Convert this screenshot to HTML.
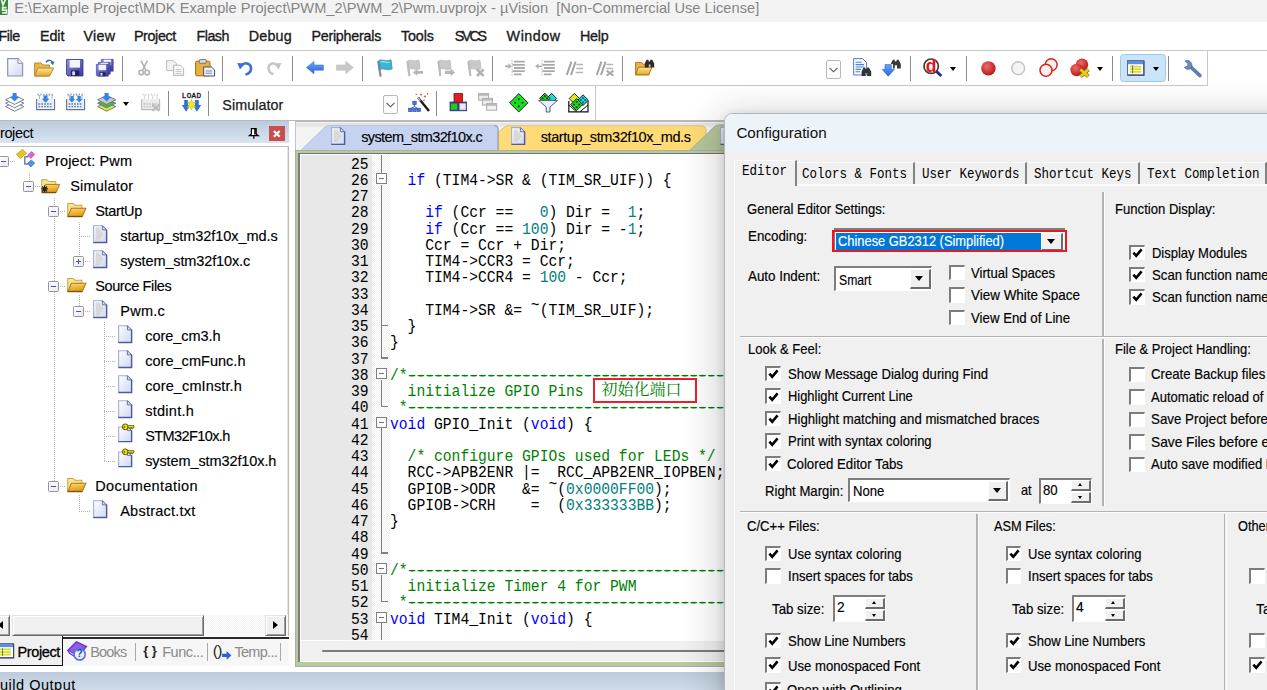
<!DOCTYPE html>
<html><head><meta charset="utf-8"><title>uVision</title>
<style>
html,body{margin:0;padding:0;}
body{width:1267px;height:690px;overflow:hidden;position:relative;background:#fff;font-family:"Liberation Sans",sans-serif;}
.t{position:absolute;white-space:pre;line-height:20px;height:20px;transform-origin:0 50%;}
.a{position:absolute;}
svg{position:absolute;overflow:visible;}
.cb{position:absolute;width:13px;height:13px;background:#fff;border:1px solid;border-color:#848484 #fff #fff #848484;box-shadow:inset 1px 1px 0 #6a6a6a, inset -1px -1px 0 #e3e3e3;}
.cb.k:after{content:"";position:absolute;left:3px;top:0px;width:3.5px;height:7.5px;border:solid #000;border-width:0 2px 2px 0;transform:rotate(40deg);}
.sunk{position:absolute;background:#fff;border:1px solid;border-color:#848484 #fff #fff #848484;box-shadow:inset 1px 1px 0 #6a6a6a, inset -1px -1px 0 #e3e3e3;box-sizing:border-box;}
.btn{position:absolute;background:#f0f0f0;border:1px solid;border-color:#e3e3e3 #6a6a6a #6a6a6a #e3e3e3;box-shadow:inset 1px 1px 0 #fff, inset -1px -1px 0 #a0a0a0;box-sizing:border-box;}
.tri{position:absolute;width:0;height:0;border-left:4px solid transparent;border-right:4px solid transparent;border-top:4px solid #000;}
.vsep{position:absolute;width:1px;background:#a0a0a0;box-shadow:1px 0 0 #fff;}
.hsep{position:absolute;height:1px;background:#a0a0a0;box-shadow:0 1px 0 #fff;}
.tsep{position:absolute;width:1px;background:#8d8d8d;}
.dot{position:absolute;}
</style></head><body>
<div class="a" style="left:0.00px;top:0.00px;width:1267.00px;height:22.30px;background:#f3f3f3;"></div>
<svg style="left:-9px;top:-1.6px" width="17" height="17" viewBox="0 0 17 17"><rect x="0" y="0" width="17" height="17" rx="2" fill="#38873f"/><path d="M10 0 L12 7 L15.6 -1 M15.6 9.6 h-4 v2.6 h4 v2.6 h-4.4" stroke="#e9f5e9" stroke-width="1.7" fill="none"/></svg>
<span class="t" style="left:14.20px;top:-1.70px;font-size:14.6px;color:#858585;letter-spacing:0.037px;">E:\Example Project\MDK Example Project\PWM_2\PWM_2\Pwm.uvprojx - µVision  [Non-Commercial Use License]</span>
<span class="t" style="left:-1.50px;top:26.20px;font-size:14.3px;color:#1b1b1b;letter-spacing:-0.449px;-webkit-text-stroke:0.35px #1b1b1b;">File</span>
<span class="t" style="left:39.90px;top:26.20px;font-size:14.3px;color:#1b1b1b;letter-spacing:-0.047px;-webkit-text-stroke:0.35px #1b1b1b;">Edit</span>
<span class="t" style="left:83.40px;top:26.20px;font-size:14.3px;color:#1b1b1b;letter-spacing:0.289px;-webkit-text-stroke:0.35px #1b1b1b;">View</span>
<span class="t" style="left:133.90px;top:26.20px;font-size:14.3px;color:#1b1b1b;letter-spacing:-0.350px;-webkit-text-stroke:0.35px #1b1b1b;">Project</span>
<span class="t" style="left:196.50px;top:26.20px;font-size:14.3px;color:#1b1b1b;letter-spacing:-0.517px;-webkit-text-stroke:0.35px #1b1b1b;">Flash</span>
<span class="t" style="left:248.80px;top:26.20px;font-size:14.3px;color:#1b1b1b;letter-spacing:0.190px;-webkit-text-stroke:0.35px #1b1b1b;">Debug</span>
<span class="t" style="left:311.40px;top:26.20px;font-size:14.3px;color:#1b1b1b;letter-spacing:-0.243px;-webkit-text-stroke:0.35px #1b1b1b;">Peripherals</span>
<span class="t" style="left:401.00px;top:26.20px;font-size:14.3px;color:#1b1b1b;letter-spacing:-0.123px;-webkit-text-stroke:0.35px #1b1b1b;">Tools</span>
<span class="t" style="left:454.80px;top:26.20px;font-size:14.3px;color:#1b1b1b;letter-spacing:-2.246px;-webkit-text-stroke:0.35px #1b1b1b;">SVCS</span>
<span class="t" style="left:506.60px;top:26.20px;font-size:14.3px;color:#1b1b1b;letter-spacing:0.548px;-webkit-text-stroke:0.35px #1b1b1b;">Window</span>
<span class="t" style="left:579.90px;top:26.20px;font-size:14.3px;color:#1b1b1b;letter-spacing:-0.202px;-webkit-text-stroke:0.35px #1b1b1b;">Help</span>
<div class="a" style="left:0.00px;top:50.00px;width:1267.00px;height:1.20px;background:#c9c9c9;"></div>
<div class="a" style="left:0.00px;top:84.60px;width:1208.00px;height:1.40px;background:#c9c9c9;"></div>
<div class="a" style="left:1207.30px;top:50.00px;width:1.20px;height:35.50px;background:#c9c9c9;"></div>
<div class="a" style="left:594.60px;top:85.00px;width:1.20px;height:35.00px;background:#c9c9c9;"></div>
<div class="a" style="left:0.00px;top:120.00px;width:1267.00px;height:1.60px;background:#b9b9b9;"></div>
<div class="a" style="left:121.70px;top:56.00px;width:1.10px;height:24.50px;background:#8c8c8c;"></div>
<div class="a" style="left:221.80px;top:56.00px;width:1.10px;height:24.50px;background:#8c8c8c;"></div>
<div class="a" style="left:292.10px;top:56.00px;width:1.10px;height:24.50px;background:#8c8c8c;"></div>
<div class="a" style="left:361.80px;top:56.00px;width:1.10px;height:24.50px;background:#8c8c8c;"></div>
<div class="a" style="left:491.90px;top:56.00px;width:1.10px;height:24.50px;background:#8c8c8c;"></div>
<div class="a" style="left:622.10px;top:56.00px;width:1.10px;height:24.50px;background:#8c8c8c;"></div>
<div class="a" style="left:909.50px;top:56.00px;width:1.10px;height:24.50px;background:#8c8c8c;"></div>
<div class="a" style="left:965.70px;top:56.00px;width:1.10px;height:24.50px;background:#8c8c8c;"></div>
<div class="a" style="left:1112.00px;top:56.00px;width:1.10px;height:24.50px;background:#8c8c8c;"></div>
<div class="a" style="left:1168.30px;top:56.00px;width:1.10px;height:24.50px;background:#8c8c8c;"></div>
<div class="a" style="left:168.30px;top:91.00px;width:1.10px;height:24.50px;background:#8c8c8c;"></div>
<div class="a" style="left:208.30px;top:91.00px;width:1.10px;height:24.50px;background:#8c8c8c;"></div>
<div class="a" style="left:435.50px;top:91.00px;width:1.10px;height:24.50px;background:#8c8c8c;"></div>
<svg width="0" height="0" style="left:0;top:0"><defs>
<linearGradient id="gDoc" x1="0" y1="0" x2="1" y2="1"><stop offset="0" stop-color="#ffffff"/><stop offset="1" stop-color="#cfd8f2"/></linearGradient>
<linearGradient id="gFold" x1="0" y1="0" x2="0" y2="1"><stop offset="0" stop-color="#fbe39a"/><stop offset="1" stop-color="#e8a726"/></linearGradient>
<linearGradient id="gFold2" x1="0" y1="0" x2="0.3" y2="1"><stop offset="0" stop-color="#fddc78"/><stop offset="1" stop-color="#e29a12"/></linearGradient>
<linearGradient id="gDisk" x1="0" y1="0" x2="1" y2="1"><stop offset="0" stop-color="#8c8fe0"/><stop offset="1" stop-color="#3b3aa0"/></linearGradient>
<radialGradient id="gRed" cx="0.4" cy="0.35" r="0.7"><stop offset="0" stop-color="#f06a6a"/><stop offset="1" stop-color="#b51212"/></radialGradient>
<linearGradient id="gBlue" x1="0" y1="0" x2="0" y2="1"><stop offset="0" stop-color="#6aa8f5"/><stop offset="1" stop-color="#2b62d9"/></linearGradient>
<linearGradient id="gHdr" x1="0" y1="0" x2="0" y2="1"><stop offset="0" stop-color="#bccbdc"/><stop offset="1" stop-color="#d8e4f1"/></linearGradient>
</defs></svg>
<svg style="left:7.0px;top:58.0px" width="16.5" height="19.0" viewBox="0 0 16.5 19"><path d="M0.7 0.7 H11 L15.6 5.3 V18 H0.7 Z" fill="url(#gDoc)" stroke="#8d93a8" stroke-width="1.2"/><path d="M11 0.7 V5.3 H15.6" fill="#eef1fb" stroke="#8d93a8" stroke-width="1"/></svg>
<svg style="left:34.3px;top:59.3px" width="21.0" height="17.5" viewBox="0 0 21 17.5"><path d="M0.6 4 H7 L9 6 H15.5 V17 H0.6 Z" fill="#e9b84a" stroke="#b98a2b" stroke-width="1"/><path d="M3.8 9 H19.6 L15.6 17 H0.6 Z" fill="url(#gFold)" stroke="#b98a2b" stroke-width="1"/><path d="M12 3.2 C14 0.6 17.5 0.8 18.8 3.6" fill="none" stroke="#3a6ea8" stroke-width="1.5"/><path d="M20.6 2.6 L19 6.2 L16.2 3.6 Z" fill="#3a6ea8"/></svg>
<svg style="left:65.7px;top:59.3px" width="17.6" height="17.4" viewBox="0 0 17.6 17.4"><path d="M0.5 0.5 H17 V17 H2 L0.5 15.5 Z" fill="url(#gDisk)" stroke="#34348e" stroke-width="0.8"/><rect x="3.6" y="1" width="10.4" height="7.6" fill="#f3f6ff"/><rect x="5" y="11.4" width="8.2" height="5.6" fill="#23235a"/><rect x="6.2" y="12.4" width="2.8" height="3.8" fill="#d8dcf0"/></svg>
<svg style="left:101.0px;top:59.3px" width="12.7" height="12.5" viewBox="0 0 17.6 17.4"><path d="M0.5 0.5 H17 V17 H2 L0.5 15.5 Z" fill="url(#gDisk)" stroke="#34348e" stroke-width="0.8"/><rect x="3.6" y="1" width="10.4" height="7.6" fill="#f3f6ff"/><rect x="5" y="11.4" width="8.2" height="5.6" fill="#23235a"/><rect x="6.2" y="12.4" width="2.8" height="3.8" fill="#d8dcf0"/></svg>
<svg style="left:98.4px;top:61.8px" width="12.7" height="12.5" viewBox="0 0 17.6 17.4"><path d="M0.5 0.5 H17 V17 H2 L0.5 15.5 Z" fill="url(#gDisk)" stroke="#34348e" stroke-width="0.8"/><rect x="3.6" y="1" width="10.4" height="7.6" fill="#f3f6ff"/><rect x="5" y="11.4" width="8.2" height="5.6" fill="#23235a"/><rect x="6.2" y="12.4" width="2.8" height="3.8" fill="#d8dcf0"/></svg>
<svg style="left:95.7px;top:64.3px" width="12.7" height="12.5" viewBox="0 0 17.6 17.4"><path d="M0.5 0.5 H17 V17 H2 L0.5 15.5 Z" fill="url(#gDisk)" stroke="#34348e" stroke-width="0.8"/><rect x="3.6" y="1" width="10.4" height="7.6" fill="#f3f6ff"/><rect x="5" y="11.4" width="8.2" height="5.6" fill="#23235a"/><rect x="6.2" y="12.4" width="2.8" height="3.8" fill="#d8dcf0"/></svg>
<svg style="left:138.0px;top:60.0px" width="12.4" height="16.2" viewBox="0 0 12.4 16.2"><path d="M3 0.5 L7.6 10 M9.4 0.5 L4.8 10" stroke="#b4b4b4" stroke-width="1.7" fill="none"/><circle cx="3.2" cy="12.6" r="2.3" fill="none" stroke="#b4b4b4" stroke-width="1.6"/><circle cx="9.2" cy="12.6" r="2.3" fill="none" stroke="#b4b4b4" stroke-width="1.6"/></svg>
<svg style="left:165.8px;top:60.0px" width="18.6" height="16.0" viewBox="0 0 18.6 16"><path d="M0.6 0.6 H7.4 L10.4 3.6 V10.6 H0.6 Z" fill="#f2f2f2" stroke="#bdbdbd" stroke-width="1"/><path d="M7.6 5.2 H14.4 L17.6 8.4 V15.4 H7.6 Z" fill="#f6f6f6" stroke="#b5b5b5" stroke-width="1"/><path d="M9.6 9.5 H15.5 M9.6 11.5 H15.5 M9.6 13.5 H15.5" stroke="#c4c4c4" stroke-width="0.9"/></svg>
<svg style="left:194.6px;top:59.2px" width="20.2" height="17.6" viewBox="0 0 20.2 17.6"><rect x="0.6" y="2.2" width="14.4" height="14.6" rx="1.2" fill="#e7b13c" stroke="#9a6c17" stroke-width="1"/><rect x="4.4" y="0.5" width="6.8" height="3.8" rx="0.8" fill="#d9d9d9" stroke="#6b6b6b" stroke-width="0.9"/><path d="M8.6 8 H16.4 L19.6 11 V17 H8.6 Z" fill="#eef0fa" stroke="#4c4f6e" stroke-width="1"/><path d="M10.6 12 H17 M10.6 14.2 H17" stroke="#7b7f9c" stroke-width="0.9"/></svg>
<svg style="left:236.5px;top:60.3px" width="16.2" height="15.4" viewBox="0 0 16.2 15.4"><path d="M4.4 5.6 C8 1.4 14.6 3.4 14 9.2 C13.6 12.4 11.4 14 8.4 14.6" fill="none" stroke="#3a6fd8" stroke-width="2.6"/><path d="M0.2 3 L8 3.4 L3 9.6 Z" fill="#3a6fd8"/></svg>
<svg style="left:267.4px;top:60.3px" width="14.6" height="15.4" viewBox="0 0 14.6 15.4"><path d="M10.4 5.6 C7 1.6 1 3.4 1.6 9 C1.9 12 3.8 13.6 6.4 14.2" fill="none" stroke="#c4c4c4" stroke-width="2.4"/><path d="M14.4 3 L7 3.4 L11.6 9.4 Z" fill="#c4c4c4"/></svg>
<svg style="left:305.8px;top:61.4px" width="17.8" height="13.2" viewBox="0 0 17.8 13.2"><path d="M0.4 6.6 L8 0.4 V4 H17.4 V9.2 H8 V12.8 Z" fill="url(#gBlue)" stroke="#3b74dc" stroke-width="0.6"/></svg>
<svg style="left:335.6px;top:61.4px" width="17.8" height="13.2" viewBox="0 0 17.8 13.2"><path d="M17.4 6.6 L9.8 0.4 V4 H0.4 V9.2 H9.8 V12.8 Z" fill="#c9c9c9" stroke="#bcbcbc" stroke-width="0.6"/></svg>
<svg style="left:375.6px;top:59.0px" width="16.4" height="18.0" viewBox="0 0 16.4 18"><path d="M2.2 2 L4.6 17.6" stroke="#8a8a8a" stroke-width="2.2"/><path d="M2.8 1.6 C6 -0.6 9 3.4 15 0.8 L16.2 9.8 C10.6 12.6 7.4 8 4 10.8 Z" fill="#3fb4d2" stroke="#2a90b0" stroke-width="0.8"/><path d="M4.4 3 C7 1.6 9 4.4 13.6 3" fill="none" stroke="#9fe0ee" stroke-width="1.2"/></svg>
<svg style="left:405.3px;top:59.4px" width="19.2" height="17.6" viewBox="0 0 19.2 17.6"><path d="M2.4 2 L4.4 17" stroke="#bcbcbc" stroke-width="2.2"/><path d="M3 1.8 C6 -0.2 8.6 3.4 14 1.2 L15 9.6 C10 12 7 8 4 10.4 Z" fill="#c9c9c9" stroke="#bababa" stroke-width="0.8"/><path d="M8 13.4 L12.4 9.8 V12 H18 V14.8 H12.4 V17 Z" fill="#b6b6b6"/></svg>
<svg style="left:435.6px;top:59.4px" width="19.2" height="17.6" viewBox="0 0 19.2 17.6"><path d="M2.4 2 L4.4 17" stroke="#bcbcbc" stroke-width="2.2"/><path d="M3 1.8 C6 -0.2 8.6 3.4 14 1.2 L15 9.6 C10 12 7 8 4 10.4 Z" fill="#c9c9c9" stroke="#bababa" stroke-width="0.8"/><path d="M19 13.4 L14.6 9.6 V11.8 H9 V15 H14.6 V17.2 Z" fill="#b6b6b6"/></svg>
<svg style="left:465.6px;top:59.4px" width="19.2" height="17.6" viewBox="0 0 19.2 17.6"><path d="M2.4 2 L4.4 17" stroke="#bcbcbc" stroke-width="2.2"/><path d="M3 1.8 C6 -0.2 8.6 3.4 14 1.2 L15 9.6 C10 12 7 8 4 10.4 Z" fill="#c9c9c9" stroke="#bababa" stroke-width="0.8"/><path d="M11 10.4 L17.6 17 M17.6 10.4 L11 17" stroke="#b2b2b2" stroke-width="2.6"/></svg>
<svg style="left:504.7px;top:60.2px" width="20.2" height="16.0" viewBox="0 0 20.2 16"><path d="M9 1.6 H19.8 M7.4 4.8 H19.8 M9 8 H19.8 M7.4 11.2 H19.8 M9 14.4 H16.6" stroke="#a9a9a9" stroke-width="1.8"/><path d="M7 0 V16" stroke="#bdbdbd" stroke-width="1" stroke-dasharray="1.6 1.2"/><path d="M6.8 6.2 L3.4 3.2 V5.2 H0.2 V7.2 H3.4 V9.2 Z" fill="#b0b0b0"/></svg>
<svg style="left:535.0px;top:60.2px" width="20.2" height="16.0" viewBox="0 0 20.2 16"><path d="M9 1.6 H19.8 M7.4 4.8 H19.8 M9 8 H19.8 M7.4 11.2 H19.8 M9 14.4 H16.6" stroke="#a9a9a9" stroke-width="1.8"/><path d="M7 0 V16" stroke="#bdbdbd" stroke-width="1" stroke-dasharray="1.6 1.2"/><path d="M0.2 6.2 L3.6 3.4 V5.4 H6.6 V7 H3.6 V9 Z" fill="#b0b0b0"/></svg>
<svg style="left:566.3px;top:61.0px" width="17.2" height="14.6" viewBox="0 0 17.2 14.6"><path d="M0.8 14 L5.4 0.6 M5 14 L9.6 0.6" stroke="#a4a4a4" stroke-width="2"/><path d="M10.4 3.4 H17 M10.4 7.4 H17 M9.6 11.4 H17" stroke="#b4b4b4" stroke-width="1.5"/></svg>
<svg style="left:595.9px;top:61.0px" width="19.0" height="14.6" viewBox="0 0 19 14.6"><path d="M0.8 14 L5.4 0.6 M5 14 L9.6 0.6" stroke="#a4a4a4" stroke-width="2"/><path d="M10.4 3.4 H17 M10.4 7.4 H17" stroke="#b4b4b4" stroke-width="1.5"/><path d="M10.6 9.6 L17.4 14.6 M17.4 9.6 L10.6 14.6" stroke="#ababab" stroke-width="2"/></svg>
<svg style="left:635.0px;top:59.4px" width="19.6" height="16.6" viewBox="0 0 19.6 16.6"><path d="M0.6 3.4 H6.4 L8.2 5.2 H14 V15.8 H0.6 Z" fill="#e8b545" stroke="#a97a1d" stroke-width="1"/><path d="M3.4 8.2 H17 L13.6 15.8 H0.6 Z" fill="url(#gFold)" stroke="#a97a1d" stroke-width="1"/><path d="M9.8 4.6 L11.6 0.8 H13.4 L13.8 2.4 H15 L15.4 0.8 H17.2 L19.2 4.6 V8.4 H15.4 V5.6 H13.6 V8.4 H9.8 Z" fill="#2b2b2b"/></svg>
<svg style="left:853.4px;top:58.2px" width="18.8" height="18.8" viewBox="0 0 18.8 18.8"><path d="M0.6 0.6 H9.6 L13.6 4.6 V17 H0.6 Z" fill="#f4f7ff" stroke="#5a7cc0" stroke-width="1"/><path d="M2.6 4.2 H8.6 M2.6 6.6 H11 M2.6 9 H11 M2.6 11.4 H8 M2.6 13.8 H7" stroke="#4d86d8" stroke-width="1.1"/><path d="M8.6 13.6 L10.6 9.4 H12.2 L12.6 11 H13.8 L14.2 9.4 H15.8 L18.2 13.6 V18 H14.2 V15 H12.6 V18 H8.6 Z" fill="#333"/></svg>
<svg style="left:882.0px;top:59.4px" width="19.2" height="17.6" viewBox="0 0 19.2 17.6"><path d="M3 5.6 H9.4 V10.4 H12.4 L6.2 17.2 L0.2 10.4 H3 Z" fill="url(#gBlue)" stroke="#2a5fd0" stroke-width="0.6"/><path d="M8.8 5 L10.8 0.8 H12.6 L13 2.4 H14.4 L14.8 0.8 H16.6 L18.8 5 V9.4 H15 V6.2 H12.8 V9.4 H11 V5 Z" fill="#3a3a3a"/></svg>
<svg style="left:923.0px;top:58.0px" width="19.4" height="19.0" viewBox="0 0 19.4 19"><circle cx="8.2" cy="8.2" r="7.2" fill="#fff" stroke="#3c3c3c" stroke-width="1.7"/><path d="M13.4 13.4 L18.4 18" stroke="#1f2aa0" stroke-width="2.8"/></svg>
<span class="t" style="left:925.80px;top:55.60px;font-size:17.5px;color:#e11;font-weight:bold;">d</span>
<div class="a" style="left:1119.50px;top:53.60px;width:46.00px;height:28.00px;background:#cce4f7;border:1px solid #99cbf0;border-radius:3.5px;box-sizing:border-box;"></div>
<div class="tri" style="left:950.4px;top:67px;border-left-width:3.6px;border-right-width:3.6px;border-top-width:4px;"></div>
<div class="tri" style="left:1097.0px;top:67px;border-left-width:3.6px;border-right-width:3.6px;border-top-width:4px;"></div>
<div class="tri" style="left:1152.8px;top:67px;border-left-width:3.6px;border-right-width:3.6px;border-top-width:4px;"></div>
<div class="tri" style="left:123px;top:102px;border-left-width:3.6px;border-right-width:3.6px;border-top-width:4.2px;"></div>
<svg style="left:981.0px;top:60.7px" width="14.8" height="14.8" viewBox="0 0 14.8 14.8"><circle cx="7.4" cy="7.4" r="7.2" fill="url(#gRed)"/></svg>
<svg style="left:1011.3px;top:60.8px" width="14.4" height="14.4" viewBox="0 0 14.4 14.4"><circle cx="7.2" cy="7.2" r="6.4" fill="#f4f4f4" stroke="#c4c4c4" stroke-width="1.4"/></svg>
<svg style="left:1038.5px;top:57.8px" width="19.2" height="19.2" viewBox="0 0 19.2 19.2"><circle cx="12.2" cy="6.8" r="6" fill="#fdeeee" stroke="#d12626" stroke-width="1.5"/><circle cx="7" cy="12.2" r="6" fill="#fdeeee" stroke="#d12626" stroke-width="1.5"/></svg>
<svg style="left:1069.5px;top:57.8px" width="21.0" height="19.4" viewBox="0 0 21 19.4"><circle cx="12" cy="6.6" r="6.2" fill="url(#gRed)"/><circle cx="6.6" cy="12" r="6.2" fill="url(#gRed)"/><path d="M10.4 11.4 L18.4 18.6 M18.4 11.4 L10.4 18.6" stroke="#8a7a10" stroke-width="4"/><path d="M10.4 11.4 L18.4 18.6 M18.4 11.4 L10.4 18.6" stroke="#e8d21e" stroke-width="2.4"/></svg>
<svg style="left:1127.3px;top:59.6px" width="17.4" height="15.6" viewBox="0 0 17.4 15.6"><rect x="0.5" y="0.5" width="16.4" height="14.6" fill="#fdfdfd" stroke="#5c6f96" stroke-width="1"/><rect x="1" y="1" width="15.4" height="3.2" fill="#5b8fe6"/><path d="M3 6.6 H14.2 M3 9.2 H14.2 M3 11.8 H14.2" stroke="#d9e021" stroke-width="1.8"/><path d="M5.6 5.4 V13.2" stroke="#6a6a3a" stroke-width="0.9"/><path d="M0.5 15.1 H16.9 V1" stroke="#3d4866" stroke-width="1.2" fill="none"/></svg>
<svg style="left:1183.2px;top:59.6px" width="18.6" height="17.8" viewBox="0 0 18.6 17.8"><path d="M7.4 6.6 L17 15.6" stroke="#5f7fb2" stroke-width="3.6" stroke-linecap="round"/><path d="M2 1 C4.6 -0.2 7.6 1 8.6 3.4 C9.2 5 9 6.4 8.2 7.6 L6.6 9 C4.6 9.6 2.6 9 1.4 7.4 L4.6 6 L5 3.6 Z" fill="#6c8cc0" stroke="#3f5f96" stroke-width="0.7"/></svg>
<svg style="left:5.3px;top:92.7px" width="19.4" height="18.6" viewBox="0 0 19.4 18.6"><path d="M0.6 13.6 L9.6 9.0 L18.8 13.6 L9.6 18.2 Z" fill="#fff" stroke="#5d6f86" stroke-width="0.9"/><path d="M0.6 10.2 L9.6 5.6 L18.8 10.2 L9.6 14.8 Z" fill="#fff" stroke="#5d6f86" stroke-width="0.9"/><path d="M0.6 6.8 L9.6 2.2 L18.8 6.8 L9.6 11.4 Z" fill="#fff" stroke="#5d6f86" stroke-width="0.9"/><path d="M7.6 0 H11.6 V4 H14 L9.6 8.6 L5.2 4 H7.6 Z" fill="#2f83ea"/></svg>
<svg style="left:35.7px;top:92.7px" width="19.4" height="18.4" viewBox="0 0 19.4 18.4"><path d="M0.6 6 V16.6 H18.6 V6" fill="#e9eef6" stroke="#5f7796" stroke-width="1.1"/><path d="M3.4 2 V6 M7.6 2 V6 M11.8 2 V6 M16 2 V6" stroke="#9aa8bc" stroke-width="0.9"/><path d="M2.6 11 H16.6 M2.6 13.6 H16.6" stroke="#5f7796" stroke-width="1.4" stroke-dasharray="1.6 1.2"/><path d="M1.6 1.6 H17.6" stroke="#7f8fa6" stroke-width="1.6" stroke-dasharray="1.2 1.6"/><path d="M8 2.4 H11.2 V5.8 H13.4 L9.6 9.8 L5.8 5.8 H8 Z" fill="#2f83ea"/></svg>
<svg style="left:65.7px;top:92.7px" width="19.4" height="18.4" viewBox="0 0 19.4 18.4"><path d="M0.6 6 V16.6 H18.6 V6" fill="#e9eef6" stroke="#5f7796" stroke-width="1.1"/><path d="M3.4 2 V6 M7.6 2 V6 M11.8 2 V6 M16 2 V6" stroke="#9aa8bc" stroke-width="0.9"/><path d="M2.6 11 H16.6 M2.6 13.6 H16.6" stroke="#5f7796" stroke-width="1.4" stroke-dasharray="1.6 1.2"/><path d="M1.6 1.6 H17.6" stroke="#7f8fa6" stroke-width="1.6" stroke-dasharray="1.2 1.6"/><path d="M4.4 3 H7.4 V6 H9.2 L5.9 9.6 L2.6 6 H4.4 Z" fill="#2f83ea"/><path d="M11.8 3 H14.8 V6 H16.6 L13.3 9.6 L10 6 H11.8 Z" fill="#2f83ea"/></svg>
<svg style="left:96.6px;top:92.7px" width="19.4" height="18.6" viewBox="0 0 19.4 18.6"><path d="M0.6 13.6 L9.6 9.0 L18.8 13.6 L9.6 18.2 Z" fill="#e3e33a" stroke="#5d6f86" stroke-width="0.9"/><path d="M0.6 10.2 L9.6 5.6 L18.8 10.2 L9.6 14.8 Z" fill="#4fb54a" stroke="#5d6f86" stroke-width="0.9"/><path d="M0.6 6.8 L9.6 2.2 L18.8 6.8 L9.6 11.4 Z" fill="#c9c9c9" stroke="#5d6f86" stroke-width="0.9"/><path d="M7.6 0 H11.6 V4 H14 L9.6 8.6 L5.2 4 H7.6 Z" fill="#2f83ea"/></svg>
<svg style="left:140.8px;top:92.7px" width="19.4" height="18.4" viewBox="0 0 19.4 18.4"><path d="M0.6 6 V16.6 H18.6 V6" fill="#ececec" stroke="#bcbcbc" stroke-width="1.1"/><path d="M3.4 2 V6 M7.6 2 V6 M11.8 2 V6 M16 2 V6" stroke="#cfcfcf" stroke-width="0.9"/><path d="M2.6 11 H16.6 M2.6 13.6 H16.6" stroke="#bcbcbc" stroke-width="1.4" stroke-dasharray="1.6 1.2"/><path d="M1.6 1.6 H17.6" stroke="#cfcfcf" stroke-width="1.6" stroke-dasharray="1.2 1.6"/><path d="M11.4 11.4 L18.6 18 M18.6 11.4 L11.4 18" stroke="#bdbdbd" stroke-width="2.4"/></svg>
<span class="t" style="left:181.80px;top:86.40px;font-size:7.6px;color:#111;font-family:'Liberation Mono', monospace;letter-spacing:0.322px;-webkit-text-stroke:0.3px #111;">LOAD</span>
<svg style="left:181.8px;top:99.6px" width="19.0" height="12.4" viewBox="0 0 19 12.4"><path d="M2.2 0 H6 V5 H8.4 L4.1 11.8 L-0.2 5 H2.2 Z" fill="#2f6fe0"/><path d="M13 0 H16.8 V5 H19.2 L14.9 11.8 L10.6 5 H13 Z" fill="#2f6fe0"/><path d="M9.5 -0.6 L10.8 2.6 L14 2 L11.8 4.6 L14 7.4 L10.8 6.8 L9.5 10 L8.2 6.8 L5 7.4 L7.2 4.6 L5 2 L8.2 2.6 Z" fill="#f0ea1c" stroke="#b7b000" stroke-width="0.5"/></svg>
<svg style="left:407.6px;top:92.7px" width="22.0" height="19.2" viewBox="0 0 22 19.2"><path d="M10 4.6 L21 18" stroke="#1b1b1b" stroke-width="2.4"/><path d="M10 4.6 L12.4 7.6" stroke="#d8d8d8" stroke-width="1.4"/><circle cx="13" cy="1.6" r="0.9" fill="#d33"/><circle cx="17" cy="3.4" r="0.9" fill="#d33"/><circle cx="19.6" cy="0.8" r="0.8" fill="#d33"/><circle cx="16" cy="7.2" r="0.8" fill="#d33"/><circle cx="8.2" cy="1.4" r="0.7" fill="#d33"/><path d="M6.4 11 V13.4 M6.4 13.4 L2.4 16 M6.4 13.4 L10.4 16" stroke="#3c63c7" stroke-width="1"/><rect x="4.8" y="8.2" width="3.4" height="3.4" fill="#4a78e0" stroke="#2647a0" stroke-width="0.6"/><rect x="0.6" y="15.2" width="3.4" height="3.4" fill="#4a78e0" stroke="#2647a0" stroke-width="0.6"/><rect x="4.8" y="15.2" width="3.4" height="3.4" fill="#4a78e0" stroke="#2647a0" stroke-width="0.6"/><rect x="9" y="15.2" width="3.4" height="3.4" fill="#4a78e0" stroke="#2647a0" stroke-width="0.6"/></svg>
<svg style="left:449.0px;top:93.2px" width="18.6" height="18.6" viewBox="0 0 18.6 18.6"><rect x="0.6" y="8.6" width="17.4" height="9.6" fill="#2a3f9c"/><rect x="5" y="0.6" width="8.6" height="8.6" fill="#e31b23" stroke="#7c1015" stroke-width="0.8"/><rect x="1.8" y="10.2" width="6.6" height="6.8" fill="#2fc233" stroke="#14721a" stroke-width="0.6"/><rect x="10.4" y="10.2" width="6.6" height="6.8" fill="#e9e9e9" stroke="#8a8a8a" stroke-width="0.6"/></svg>
<svg style="left:478.0px;top:93.2px" width="19.4" height="18.6" viewBox="0 0 19.4 18.6"><rect x="0.6" y="0.6" width="10" height="6.6" fill="#ececec" stroke="#a9a9a9"/><rect x="0.6" y="0.6" width="10" height="2.2" fill="#b9b9b9"/><rect x="4.4" y="5.4" width="10" height="6.6" fill="#ececec" stroke="#a9a9a9"/><rect x="4.4" y="5.4" width="10" height="2.2" fill="#b9b9b9"/><rect x="8.6" y="10.6" width="10" height="6.6" fill="#f2f2f2" stroke="#a9a9a9"/><rect x="8.6" y="10.6" width="10" height="2.2" fill="#b9b9b9"/></svg>
<svg style="left:508.7px;top:92.7px" width="19.6" height="19.6" viewBox="0 0 19.6 19.6"><path d="M9.8 0.6 L19.0 9.8 L9.8 19.0 L0.6 9.8 Z" fill="#18e01e" stroke="#111" stroke-width="0.9"/><circle cx="9.8" cy="6.2" r="1.1" fill="#0b4d0e"/><circle cx="13.4" cy="9.8" r="1.1" fill="#0b4d0e"/><circle cx="9.8" cy="13.4" r="1.1" fill="#0b4d0e"/><circle cx="6.2" cy="9.8" r="1.1" fill="#0b4d0e"/></svg>
<svg style="left:537.9px;top:92.7px" width="20.2" height="19.6" viewBox="0 0 20.2 19.6"><path d="M13.6 0.4 L18.6 5.4 L13.6 10.4 L8.6 5.4 Z" fill="#19d9e6" stroke="#111" stroke-width="0.9"/><path d="M6.8 0.2 L12.0 5.4 L6.8 10.6 L1.6 5.4 Z" fill="#18e01e" stroke="#111" stroke-width="0.9"/><circle cx="6.8" cy="3.2" r="1.1" fill="#0b4d0e"/><circle cx="9.0" cy="5.4" r="1.1" fill="#0b4d0e"/><circle cx="6.8" cy="7.6" r="1.1" fill="#0b4d0e"/><circle cx="4.6" cy="5.4" r="1.1" fill="#0b4d0e"/><path d="M0.6 7.4 H19.6 L12 14 V19 H8.2 V14 Z" fill="#e9eef6" stroke="#4d5f7a" stroke-width="1"/></svg>
<svg style="left:568.2px;top:92.7px" width="20.8" height="19.6" viewBox="0 0 20.8 19.6"><path d="M0.8 8 V18.8 H20 V8" fill="#fff" stroke="#111" stroke-width="1.2"/><path d="M6.4 0.4 L11.6 5.6 L6.4 10.8 L1.2 5.6 Z" fill="#e2e620" stroke="#111" stroke-width="0.9"/><path d="M15.0 1.8 L20.4 7.2 L15.0 12.6 L9.6 7.2 Z" fill="#19d9e6" stroke="#111" stroke-width="0.9"/><circle cx="15.0" cy="5.0" r="1.1" fill="#0a6a75"/><circle cx="17.2" cy="7.2" r="1.1" fill="#0a6a75"/><circle cx="15.0" cy="9.4" r="1.1" fill="#0a6a75"/><circle cx="12.8" cy="7.2" r="1.1" fill="#0a6a75"/><path d="M8.6 5.6 L14.6 11.6 L8.6 17.6 L2.6 11.6 Z" fill="#18e01e" stroke="#111" stroke-width="0.9"/><circle cx="8.6" cy="9.0" r="1.1" fill="#0b4d0e"/><circle cx="11.2" cy="11.6" r="1.1" fill="#0b4d0e"/><circle cx="8.6" cy="14.2" r="1.1" fill="#0b4d0e"/><circle cx="6.0" cy="11.6" r="1.1" fill="#0b4d0e"/><path d="M0.8 12 L8.6 18.8 M20 12 L12 18.8" stroke="#111" stroke-width="1" fill="none"/></svg>
<span class="t" style="left:222.30px;top:95.20px;font-size:14.3px;color:#1b1b1b;letter-spacing:0.076px;-webkit-text-stroke:0.25px #1b1b1b;">Simulator</span>
<div class="a" style="left:383.30px;top:94.50px;width:15.00px;height:19.50px;border:1px solid #b9b9b9;border-radius:2px;background:#fdfdfd;box-sizing:border-box;"></div>
<svg style="left:386.3px;top:102.0px" width="9" height="6" viewBox="0 0 9 6"><path d="M0.5 0.8 L4.5 4.8 L8.5 0.8" stroke="#555" stroke-width="1.1" fill="none"/></svg>
<div class="a" style="left:826.00px;top:59.50px;width:15.00px;height:19.50px;border:1px solid #b9b9b9;border-radius:2px;background:#fdfdfd;box-sizing:border-box;"></div>
<svg style="left:829.0px;top:67.0px" width="9" height="6" viewBox="0 0 9 6"><path d="M0.5 0.8 L4.5 4.8 L8.5 0.8" stroke="#555" stroke-width="1.1" fill="none"/></svg>
<div class="a" style="left:0.00px;top:120.90px;width:289.40px;height:22.20px;background:linear-gradient(#bccbdc,#d8e4f1);"></div>
<span class="t" style="left:-9.40px;top:123.20px;font-size:14.5px;color:#000;letter-spacing:-0.357px;">Project</span>
<svg style="left:249.4px;top:128.0px" width="8.8" height="10.8" viewBox="0 0 8.8 10.8"><path d="M2.4 0.6 H7.2 V6 L9.2 7.6 H0.4 L2.4 6 Z" fill="#fff" stroke="#000" stroke-width="1.2"/><path d="M6 0.6 V6.6" stroke="#000" stroke-width="1.6"/><path d="M4.8 7.6 V10.8" stroke="#000" stroke-width="1.2"/></svg>
<div class="a" style="left:269.40px;top:125.80px;width:15.20px;height:15.20px;background:#c94f4f;"></div>
<svg style="left:273.2px;top:129.8px" width="7.6" height="7.6" viewBox="0 0 8.4 8.4"><path d="M1 1 L7.4 7.4 M7.4 1 L1 7.4" stroke="#fff" stroke-width="2.3"/></svg>
<div class="a" style="left:0.00px;top:146.20px;width:289.00px;height:490.00px;border:1px solid #bcbcbc;border-left:none;box-sizing:border-box;background:#fff;"></div>
<div class="a" style="left:287.00px;top:147.00px;width:1.00px;height:468.00px;background:#e4e4e4;"></div>
<div class="a" style="left:28.80px;top:173.00px;width:1.00px;height:8.00px;background:repeating-linear-gradient(180deg,#b4b4b4 0 1px,transparent 1px 2px);"></div>
<div class="a" style="left:53.80px;top:198.00px;width:1.00px;height:283.00px;background:repeating-linear-gradient(180deg,#b4b4b4 0 1px,transparent 1px 2px);"></div>
<div class="a" style="left:78.80px;top:222.00px;width:1.00px;height:34.00px;background:repeating-linear-gradient(180deg,#b4b4b4 0 1px,transparent 1px 2px);"></div>
<div class="a" style="left:78.80px;top:295.00px;width:1.00px;height:11.00px;background:repeating-linear-gradient(180deg,#b4b4b4 0 1px,transparent 1px 2px);"></div>
<div class="a" style="left:103.80px;top:322.00px;width:1.00px;height:139.00px;background:repeating-linear-gradient(180deg,#b4b4b4 0 1px,transparent 1px 2px);"></div>
<div class="a" style="left:78.80px;top:495.00px;width:1.00px;height:16.00px;background:repeating-linear-gradient(180deg,#b4b4b4 0 1px,transparent 1px 2px);"></div>
<div class="a" style="left:9.80px;top:161.00px;width:5.20px;height:1.00px;background:repeating-linear-gradient(90deg,#b4b4b4 0 1px,transparent 1px 2px);"></div>
<div class="a" style="left:-1.80px;top:156.00px;width:10.80px;height:10.80px;border:1px solid #969696;border-radius:1.5px;background:linear-gradient(135deg,#fff,#e9e9e9);box-sizing:border-box;"></div>
<div class="a" style="left:0.90px;top:160.70px;width:5.40px;height:1.50px;background:#3c57b8;"></div>
<svg style="left:16.0px;top:148.8px" width="19.2" height="18.6" viewBox="0 0 19.2 18.6"><path d="M8.8 7.6 V15 H12 M8.8 7.8 H12.4" fill="none" stroke="#6d80a8" stroke-width="1.5"/><path d="M0.4 5.2 L6.6 0.4 L10.6 4.2 L4.4 9.4 Z" fill="#e8c420" stroke="#b0900c" stroke-width="0.7"/><path d="M11.6 6.2 L15.6 2.6 L18.8 5.6 L14.8 9.4 Z" fill="#e062d8" stroke="#b23fae" stroke-width="0.6"/><path d="M11.4 14.6 L15.2 11 L18.8 14 L15 18 Z" fill="#4f94ea" stroke="#2e6cc4" stroke-width="0.6"/></svg>
<span class="t" style="left:45.20px;top:150.80px;font-size:14.5px;color:#000;letter-spacing:0.125px;-webkit-text-stroke:0.15px;">Project: Pwm</span>
<div class="a" style="left:34.80px;top:186.00px;width:5.20px;height:1.00px;background:repeating-linear-gradient(90deg,#b4b4b4 0 1px,transparent 1px 2px);"></div>
<div class="a" style="left:23.20px;top:181.00px;width:10.80px;height:10.80px;border:1px solid #969696;border-radius:1.5px;background:linear-gradient(135deg,#fff,#e9e9e9);box-sizing:border-box;"></div>
<div class="a" style="left:25.90px;top:185.70px;width:5.40px;height:1.50px;background:#3c57b8;"></div>
<svg style="left:40.6px;top:176.6px" width="20.6" height="17.0" viewBox="0 -1 20.6 16"><path d="M0.7 1.2 H6.2 L7.8 3 H14.8 V13.8 H0.7 Z" fill="#f6e494" stroke="#c8a545" stroke-width="1"/><path d="M4.3 5.9 H18.7 L15.1 14 H0.8 Z" fill="url(#gFold2)" stroke="#a87a18" stroke-width="1"/><path d="M0.8 14.1 H15.1" stroke="#6e5312" stroke-width="1.3"/><path d="M3.6 7 V14 M0.2 10.4 H7 M1.2 8 L6 13 M6 8 L1.2 13" stroke="#222" stroke-width="1.2"/></svg>
<span class="t" style="left:70.20px;top:175.80px;font-size:14.5px;color:#000;letter-spacing:0.194px;-webkit-text-stroke:0.15px;">Simulator</span>
<div class="a" style="left:59.80px;top:211.00px;width:5.20px;height:1.00px;background:repeating-linear-gradient(90deg,#b4b4b4 0 1px,transparent 1px 2px);"></div>
<div class="a" style="left:48.20px;top:206.00px;width:10.80px;height:10.80px;border:1px solid #969696;border-radius:1.5px;background:linear-gradient(135deg,#fff,#e9e9e9);box-sizing:border-box;"></div>
<div class="a" style="left:50.90px;top:210.70px;width:5.40px;height:1.50px;background:#3c57b8;"></div>
<svg style="left:66.8px;top:201.6px" width="19.6" height="16.0" viewBox="0 0.8 19.4 13.6"><path d="M0.7 1.2 H6.2 L7.8 3 H14.8 V13.8 H0.7 Z" fill="#f6e494" stroke="#c8a545" stroke-width="1"/><path d="M4.3 5.9 H18.7 L15.1 14 H0.8 Z" fill="url(#gFold2)" stroke="#a87a18" stroke-width="1"/><path d="M0.8 14.1 H15.1" stroke="#6e5312" stroke-width="1.3"/></svg>
<span class="t" style="left:95.20px;top:200.80px;font-size:14.5px;color:#000;letter-spacing:-0.345px;-webkit-text-stroke:0.15px;">StartUp</span>
<div class="a" style="left:78.80px;top:236.00px;width:11.20px;height:1.00px;background:repeating-linear-gradient(90deg,#b4b4b4 0 1px,transparent 1px 2px);"></div>
<svg style="left:93.4px;top:224.6px" width="14.4" height="18.4" viewBox="0 0 14.4 18.2"><path d="M0.6 0.6 H9.4 L13.6 4.8 V17.4 H0.6 Z" fill="url(#gDoc)" stroke="#a3aed4" stroke-width="1.1"/><path d="M13.6 4.4 V17.4 H0.4" fill="none" stroke="#4d5c9c" stroke-width="1.4"/><path d="M9.4 0.6 V4.8 H13.6 Z" fill="#dfe5f7" stroke="#5868a6" stroke-width="0.9"/><path d="M2.6 2.4 H6 L10.6 9 L6 15.6 H2.6 Z" fill="#d6d6d6" opacity="0.9"/></svg>
<span class="t" style="left:120.20px;top:225.80px;font-size:14.5px;color:#000;letter-spacing:-0.056px;-webkit-text-stroke:0.15px;">startup_stm32f10x_md.s</span>
<div class="a" style="left:84.80px;top:261.00px;width:5.20px;height:1.00px;background:repeating-linear-gradient(90deg,#b4b4b4 0 1px,transparent 1px 2px);"></div>
<div class="a" style="left:73.20px;top:256.00px;width:10.80px;height:10.80px;border:1px solid #969696;border-radius:1.5px;background:linear-gradient(135deg,#fff,#e9e9e9);box-sizing:border-box;"></div>
<div class="a" style="left:75.90px;top:260.70px;width:5.40px;height:1.50px;background:#3c57b8;"></div>
<div class="a" style="left:77.90px;top:258.60px;width:1.50px;height:5.60px;background:#3c57b8;"></div>
<svg style="left:93.4px;top:249.6px" width="14.4" height="18.4" viewBox="0 0 14.4 18.2"><path d="M0.6 0.6 H9.4 L13.6 4.8 V17.4 H0.6 Z" fill="url(#gDoc)" stroke="#a3aed4" stroke-width="1.1"/><path d="M13.6 4.4 V17.4 H0.4" fill="none" stroke="#4d5c9c" stroke-width="1.4"/><path d="M9.4 0.6 V4.8 H13.6 Z" fill="#dfe5f7" stroke="#5868a6" stroke-width="0.9"/><path d="M2.6 2.4 H6 L10.6 9 L6 15.6 H2.6 Z" fill="#d6d6d6" opacity="0.9"/></svg>
<span class="t" style="left:120.20px;top:250.80px;font-size:14.5px;color:#000;letter-spacing:-0.122px;-webkit-text-stroke:0.15px;">system_stm32f10x.c</span>
<div class="a" style="left:59.80px;top:286.00px;width:5.20px;height:1.00px;background:repeating-linear-gradient(90deg,#b4b4b4 0 1px,transparent 1px 2px);"></div>
<div class="a" style="left:48.20px;top:281.00px;width:10.80px;height:10.80px;border:1px solid #969696;border-radius:1.5px;background:linear-gradient(135deg,#fff,#e9e9e9);box-sizing:border-box;"></div>
<div class="a" style="left:50.90px;top:285.70px;width:5.40px;height:1.50px;background:#3c57b8;"></div>
<svg style="left:66.8px;top:276.6px" width="19.6" height="16.0" viewBox="0 0.8 19.4 13.6"><path d="M0.7 1.2 H6.2 L7.8 3 H14.8 V13.8 H0.7 Z" fill="#f6e494" stroke="#c8a545" stroke-width="1"/><path d="M4.3 5.9 H18.7 L15.1 14 H0.8 Z" fill="url(#gFold2)" stroke="#a87a18" stroke-width="1"/><path d="M0.8 14.1 H15.1" stroke="#6e5312" stroke-width="1.3"/></svg>
<span class="t" style="left:95.20px;top:275.80px;font-size:14.5px;color:#000;letter-spacing:-0.372px;-webkit-text-stroke:0.15px;">Source Files</span>
<div class="a" style="left:84.80px;top:311.00px;width:5.20px;height:1.00px;background:repeating-linear-gradient(90deg,#b4b4b4 0 1px,transparent 1px 2px);"></div>
<div class="a" style="left:73.20px;top:306.00px;width:10.80px;height:10.80px;border:1px solid #969696;border-radius:1.5px;background:linear-gradient(135deg,#fff,#e9e9e9);box-sizing:border-box;"></div>
<div class="a" style="left:75.90px;top:310.70px;width:5.40px;height:1.50px;background:#3c57b8;"></div>
<svg style="left:93.4px;top:299.6px" width="14.4" height="18.4" viewBox="0 0 14.4 18.2"><path d="M0.6 0.6 H9.4 L13.6 4.8 V17.4 H0.6 Z" fill="url(#gDoc)" stroke="#a3aed4" stroke-width="1.1"/><path d="M13.6 4.4 V17.4 H0.4" fill="none" stroke="#4d5c9c" stroke-width="1.4"/><path d="M9.4 0.6 V4.8 H13.6 Z" fill="#dfe5f7" stroke="#5868a6" stroke-width="0.9"/><path d="M2.6 2.4 H6 L10.6 9 L6 15.6 H2.6 Z" fill="#d6d6d6" opacity="0.9"/></svg>
<span class="t" style="left:120.20px;top:300.80px;font-size:14.5px;color:#000;letter-spacing:0.275px;-webkit-text-stroke:0.15px;">Pwm.c</span>
<div class="a" style="left:103.80px;top:336.00px;width:11.20px;height:1.00px;background:repeating-linear-gradient(90deg,#b4b4b4 0 1px,transparent 1px 2px);"></div>
<svg style="left:118.4px;top:324.6px" width="14.4" height="18.4" viewBox="0 0 14.4 18.2"><path d="M0.6 0.6 H9.4 L13.6 4.8 V17.4 H0.6 Z" fill="url(#gDoc)" stroke="#a3aed4" stroke-width="1.1"/><path d="M13.6 4.4 V17.4 H0.4" fill="none" stroke="#4d5c9c" stroke-width="1.4"/><path d="M9.4 0.6 V4.8 H13.6 Z" fill="#dfe5f7" stroke="#5868a6" stroke-width="0.9"/></svg>
<span class="t" style="left:145.20px;top:325.80px;font-size:14.5px;color:#000;letter-spacing:-0.041px;-webkit-text-stroke:0.15px;">core_cm3.h</span>
<div class="a" style="left:103.80px;top:361.00px;width:11.20px;height:1.00px;background:repeating-linear-gradient(90deg,#b4b4b4 0 1px,transparent 1px 2px);"></div>
<svg style="left:118.4px;top:349.6px" width="14.4" height="18.4" viewBox="0 0 14.4 18.2"><path d="M0.6 0.6 H9.4 L13.6 4.8 V17.4 H0.6 Z" fill="url(#gDoc)" stroke="#a3aed4" stroke-width="1.1"/><path d="M13.6 4.4 V17.4 H0.4" fill="none" stroke="#4d5c9c" stroke-width="1.4"/><path d="M9.4 0.6 V4.8 H13.6 Z" fill="#dfe5f7" stroke="#5868a6" stroke-width="0.9"/></svg>
<span class="t" style="left:145.20px;top:350.80px;font-size:14.5px;color:#000;letter-spacing:0.030px;-webkit-text-stroke:0.15px;">core_cmFunc.h</span>
<div class="a" style="left:103.80px;top:386.00px;width:11.20px;height:1.00px;background:repeating-linear-gradient(90deg,#b4b4b4 0 1px,transparent 1px 2px);"></div>
<svg style="left:118.4px;top:374.6px" width="14.4" height="18.4" viewBox="0 0 14.4 18.2"><path d="M0.6 0.6 H9.4 L13.6 4.8 V17.4 H0.6 Z" fill="url(#gDoc)" stroke="#a3aed4" stroke-width="1.1"/><path d="M13.6 4.4 V17.4 H0.4" fill="none" stroke="#4d5c9c" stroke-width="1.4"/><path d="M9.4 0.6 V4.8 H13.6 Z" fill="#dfe5f7" stroke="#5868a6" stroke-width="0.9"/></svg>
<span class="t" style="left:145.20px;top:375.80px;font-size:14.5px;color:#000;letter-spacing:0.116px;-webkit-text-stroke:0.15px;">core_cmInstr.h</span>
<div class="a" style="left:103.80px;top:411.00px;width:11.20px;height:1.00px;background:repeating-linear-gradient(90deg,#b4b4b4 0 1px,transparent 1px 2px);"></div>
<svg style="left:118.4px;top:399.6px" width="14.4" height="18.4" viewBox="0 0 14.4 18.2"><path d="M0.6 0.6 H9.4 L13.6 4.8 V17.4 H0.6 Z" fill="url(#gDoc)" stroke="#a3aed4" stroke-width="1.1"/><path d="M13.6 4.4 V17.4 H0.4" fill="none" stroke="#4d5c9c" stroke-width="1.4"/><path d="M9.4 0.6 V4.8 H13.6 Z" fill="#dfe5f7" stroke="#5868a6" stroke-width="0.9"/></svg>
<span class="t" style="left:145.20px;top:400.80px;font-size:14.5px;color:#000;letter-spacing:0.279px;-webkit-text-stroke:0.15px;">stdint.h</span>
<div class="a" style="left:103.80px;top:436.00px;width:11.20px;height:1.00px;background:repeating-linear-gradient(90deg,#b4b4b4 0 1px,transparent 1px 2px);"></div>
<svg style="left:118.4px;top:424.4px" width="14.4" height="18.4" viewBox="0 0 14.4 18.4"><g transform="translate(0,2.4) scale(1,0.87)"><path d="M0.6 0.6 H9.4 L13.6 4.8 V17.4 H0.6 Z" fill="url(#gDoc)" stroke="#a3aed4" stroke-width="1.1"/><path d="M13.6 4.4 V17.4 H0.4" fill="none" stroke="#4d5c9c" stroke-width="1.4"/><path d="M9.4 0.6 V4.8 H13.6 Z" fill="#dfe5f7" stroke="#5868a6" stroke-width="0.9"/></g><g transform="translate(2.2,0.2)"><circle cx="5" cy="2.6" r="2.9" fill="#f2e500" stroke="#5c5600" stroke-width="1"/><circle cx="4.2" cy="2.6" r="0.9" fill="#5c5600"/><path d="M7.6 1.4 H13.8 V3.4 H12.6 V4.6 H11.4 V3.4 H10.4 V4.4 H9.4 V3.4 H7.6 Z" fill="#f2e500" stroke="#5c5600" stroke-width="0.8"/></g></svg>
<span class="t" style="left:145.20px;top:425.80px;font-size:14.5px;color:#000;letter-spacing:-0.588px;-webkit-text-stroke:0.15px;">STM32F10x.h</span>
<div class="a" style="left:103.80px;top:461.00px;width:11.20px;height:1.00px;background:repeating-linear-gradient(90deg,#b4b4b4 0 1px,transparent 1px 2px);"></div>
<svg style="left:118.4px;top:449.4px" width="14.4" height="18.4" viewBox="0 0 14.4 18.4"><g transform="translate(0,2.4) scale(1,0.87)"><path d="M0.6 0.6 H9.4 L13.6 4.8 V17.4 H0.6 Z" fill="url(#gDoc)" stroke="#a3aed4" stroke-width="1.1"/><path d="M13.6 4.4 V17.4 H0.4" fill="none" stroke="#4d5c9c" stroke-width="1.4"/><path d="M9.4 0.6 V4.8 H13.6 Z" fill="#dfe5f7" stroke="#5868a6" stroke-width="0.9"/></g><g transform="translate(2.2,0.2)"><circle cx="5" cy="2.6" r="2.9" fill="#f2e500" stroke="#5c5600" stroke-width="1"/><circle cx="4.2" cy="2.6" r="0.9" fill="#5c5600"/><path d="M7.6 1.4 H13.8 V3.4 H12.6 V4.6 H11.4 V3.4 H10.4 V4.4 H9.4 V3.4 H7.6 Z" fill="#f2e500" stroke="#5c5600" stroke-width="0.8"/></g></svg>
<span class="t" style="left:145.20px;top:450.80px;font-size:14.5px;color:#000;letter-spacing:-0.105px;-webkit-text-stroke:0.15px;">system_stm32f10x.h</span>
<div class="a" style="left:59.80px;top:486.00px;width:5.20px;height:1.00px;background:repeating-linear-gradient(90deg,#b4b4b4 0 1px,transparent 1px 2px);"></div>
<div class="a" style="left:48.20px;top:481.00px;width:10.80px;height:10.80px;border:1px solid #969696;border-radius:1.5px;background:linear-gradient(135deg,#fff,#e9e9e9);box-sizing:border-box;"></div>
<div class="a" style="left:50.90px;top:485.70px;width:5.40px;height:1.50px;background:#3c57b8;"></div>
<svg style="left:66.8px;top:476.6px" width="19.6" height="16.0" viewBox="0 0.8 19.4 13.6"><path d="M0.7 1.2 H6.2 L7.8 3 H14.8 V13.8 H0.7 Z" fill="#f6e494" stroke="#c8a545" stroke-width="1"/><path d="M4.3 5.9 H18.7 L15.1 14 H0.8 Z" fill="url(#gFold2)" stroke="#a87a18" stroke-width="1"/><path d="M0.8 14.1 H15.1" stroke="#6e5312" stroke-width="1.3"/></svg>
<span class="t" style="left:95.20px;top:475.80px;font-size:14.5px;color:#000;letter-spacing:0.406px;-webkit-text-stroke:0.15px;">Documentation</span>
<div class="a" style="left:78.80px;top:511.00px;width:11.20px;height:1.00px;background:repeating-linear-gradient(90deg,#b4b4b4 0 1px,transparent 1px 2px);"></div>
<svg style="left:93.4px;top:499.6px" width="14.4" height="18.4" viewBox="0 0 14.4 18.2"><path d="M0.6 0.6 H9.4 L13.6 4.8 V17.4 H0.6 Z" fill="url(#gDoc)" stroke="#a3aed4" stroke-width="1.1"/><path d="M13.6 4.4 V17.4 H0.4" fill="none" stroke="#4d5c9c" stroke-width="1.4"/><path d="M9.4 0.6 V4.8 H13.6 Z" fill="#dfe5f7" stroke="#5868a6" stroke-width="0.9"/></svg>
<span class="t" style="left:120.20px;top:500.80px;font-size:14.5px;color:#000;letter-spacing:0.234px;-webkit-text-stroke:0.15px;">Abstract.txt</span>
<div class="a" style="left:0.00px;top:614.80px;width:288.00px;height:21.40px;background:#fafafa;background-image:repeating-conic-gradient(#fff 0 25%,#f2f2f2 0 50%);background-size:2px 2px;"></div>
<div class="btn" style="left:-8.00px;top:614.80px;width:18.40px;height:21.40px;"></div>
<div class="btn" style="left:12.00px;top:614.80px;width:192.40px;height:21.40px;"></div>
<div class="btn" style="left:264.60px;top:614.80px;width:21.00px;height:21.40px;"></div>
<div class="a" style="left:-2px;top:621px;width:0;height:0;border-top:4.5px solid transparent;border-bottom:4.5px solid transparent;border-right:5px solid #000;"></div>
<div class="a" style="left:273.4px;top:621px;width:0;height:0;border-top:4.5px solid transparent;border-bottom:4.5px solid transparent;border-left:5px solid #000;"></div>
<div class="a" style="left:0.00px;top:637.40px;width:289.40px;height:28.80px;background:#f6f6f6;"></div>
<div class="a" style="left:0.00px;top:637.20px;width:289.00px;height:1.50px;background:#2a2a2a;"></div>
<div class="a" style="left:0.00px;top:636.40px;width:63.40px;height:29.60px;background:#f0f0f0;border-right:1.6px solid #111;border-bottom:1.6px solid #111;box-sizing:border-box;"></div>
<svg style="left:-3.0px;top:642.6px" width="17.1" height="15.3" viewBox="0 0 17.4 15.6"><rect x="0.5" y="0.5" width="16.4" height="14.6" fill="#fdfdfd" stroke="#5c6f96" stroke-width="1"/><rect x="1" y="1" width="15.4" height="3.2" fill="#5b8fe6"/><path d="M3 6.6 H14.2 M3 9.2 H14.2 M3 11.8 H14.2" stroke="#d9e021" stroke-width="1.8"/><path d="M5.6 5.4 V13.2" stroke="#6a6a3a" stroke-width="0.9"/><path d="M0.5 15.1 H16.9 V1" stroke="#3d4866" stroke-width="1.2" fill="none"/></svg>
<span class="t" style="left:17.40px;top:642.40px;font-size:14.5px;color:#000;letter-spacing:-0.357px;-webkit-text-stroke:0.3px #000;">Project</span>
<svg style="left:66.6px;top:640.8px" width="20.4" height="20.4" viewBox="0 0 20.4 20.4"><path d="M0.8 9.4 L9.4 0.8 L19.4 5.4 L11 15.6 Z" fill="#8a62e0" stroke="#6a2be0" stroke-width="1.4"/><path d="M0.8 9.4 L2.6 12.4 L12.4 18.4 L11 15.6" fill="#d7c9f6" stroke="#6a2be0" stroke-width="1.2"/><circle cx="12.6" cy="13.4" r="5.6" fill="#e8eefc" stroke="#5a6fd8" stroke-width="1.6"/></svg>
<span class="t" style="left:76.40px;top:644.40px;font-size:10px;color:#2a3fb0;font-weight:bold;">?</span>
<span class="t" style="left:90.20px;top:642.40px;font-size:14.5px;color:#8a8a8a;letter-spacing:-0.828px;">Books</span>
<div class="a" style="left:134.80px;top:642.50px;width:1.00px;height:18.40px;background:#a9a9a9;"></div>
<span class="t" style="left:143.20px;top:640.80px;font-size:13px;color:#222;font-weight:bold;letter-spacing:3.475px;">{}</span>
<span class="t" style="left:162.20px;top:642.40px;font-size:14.5px;color:#8a8a8a;letter-spacing:-0.471px;">Func...</span>
<div class="a" style="left:207.00px;top:642.50px;width:1.00px;height:18.40px;background:#a9a9a9;"></div>
<span class="t" style="left:212.80px;top:640.60px;font-size:15.5px;color:#222;letter-spacing:-0.728px;">()</span>
<svg style="left:222.4px;top:651.4px" width="9.6" height="8.8" viewBox="0 0 9.6 8.8"><path d="M0 2.8 H4.6 V0 L9.4 4.4 L4.6 8.8 V6 H0 Z" fill="#2f5fe0"/></svg>
<span class="t" style="left:234.40px;top:642.40px;font-size:14.5px;color:#8a8a8a;letter-spacing:-0.691px;">Temp...</span>
<div class="a" style="left:279.80px;top:642.50px;width:1.00px;height:18.40px;background:#a9a9a9;"></div>
<div class="a" style="left:289.40px;top:121.00px;width:5.40px;height:545.00px;background:#fff;"></div>
<div class="a" style="left:0.00px;top:672.10px;width:1267.00px;height:18.00px;background:linear-gradient(#bccbdc,#cfdbe9);"></div>
<span class="t" style="left:-10.20px;top:674.90px;font-size:14.5px;color:#000;letter-spacing:0.517px;">Build Output</span>
<div class="a" style="left:294.80px;top:121.60px;width:980.00px;height:30.00px;background:linear-gradient(#fafafa 0,#e4e4e4 1.2px,#e9e9e9 4.5px,#f4f4f4 5px);border-left:1px solid #c4c4c4;box-sizing:border-box;"></div>
<svg style="left:0;top:0" width="1267" height="160" viewBox="0 0 1267 160"><path d="M498.6 150.6 V132 L505.2 126.6 Q506.4 125.8 509 125.8 H701.6 Q705.4 125.8 706 129.2 L706 150.6 Z" fill="#ffdb75" stroke="#d8c48a" stroke-width="1"/><path d="M300.6 150.6 L325 127 Q326.6 125.4 329.6 125.4 H494 Q497.6 125.4 497.8 128.6 L498 150.6 Z" fill="#c5d3f0" stroke="#b9c2d6" stroke-width="1"/><path d="M689.6 150.6 L714.4 126.6 Q716.2 125 719 125 H1300 V150.6 Z" fill="#b6c69d" stroke="#a7b392" stroke-width="1"/><path d="M494.4 125.6 Q497.8 125.8 498 129 V150.4" fill="none" stroke="#a4a8b2" stroke-width="1.5"/></svg>
<svg style="left:331.0px;top:127.2px" width="14.4" height="18.2" viewBox="0 0 14.4 18.2"><path d="M0.6 0.6 H9.4 L13.6 4.8 V17.4 H0.6 Z" fill="url(#gDoc)" stroke="#a3aed4" stroke-width="1.1"/><path d="M13.6 4.4 V17.4 H0.4" fill="none" stroke="#4d5c9c" stroke-width="1.4"/><path d="M9.4 0.6 V4.8 H13.6 Z" fill="#dfe5f7" stroke="#5868a6" stroke-width="0.9"/><path d="M2.6 2.4 H6 L10.6 9 L6 15.6 H2.6 Z" fill="#d6d6d6" opacity="0.9"/></svg>
<svg style="left:511.4px;top:127.2px" width="14.4" height="18.2" viewBox="0 0 14.4 18.2"><path d="M0.6 0.6 H9.4 L13.6 4.8 V17.4 H0.6 Z" fill="url(#gDoc)" stroke="#a3aed4" stroke-width="1.1"/><path d="M13.6 4.4 V17.4 H0.4" fill="none" stroke="#4d5c9c" stroke-width="1.4"/><path d="M9.4 0.6 V4.8 H13.6 Z" fill="#dfe5f7" stroke="#5868a6" stroke-width="0.9"/><path d="M2.6 2.4 H6 L10.6 9 L6 15.6 H2.6 Z" fill="#d6d6d6" opacity="0.9"/></svg>
<svg style="left:720.4px;top:126.6px" width="14.4" height="18.2" viewBox="0 0 14.4 18.2"><path d="M0.6 0.6 H9.4 L13.6 4.8 V17.4 H0.6 Z" fill="url(#gDoc)" stroke="#a3aed4" stroke-width="1.1"/><path d="M13.6 4.4 V17.4 H0.4" fill="none" stroke="#4d5c9c" stroke-width="1.4"/><path d="M9.4 0.6 V4.8 H13.6 Z" fill="#dfe5f7" stroke="#5868a6" stroke-width="0.9"/><path d="M2.6 2.4 H6 L10.6 9 L6 15.6 H2.6 Z" fill="#d6d6d6" opacity="0.9"/></svg>
<span class="t" style="left:361.20px;top:127.00px;font-size:14.5px;color:#000;letter-spacing:-0.628px;-webkit-text-stroke:0.12px #000;">system_stm32f10x.c</span>
<span class="t" style="left:540.70px;top:127.00px;font-size:14.5px;color:#000;letter-spacing:-0.404px;-webkit-text-stroke:0.12px #000;">startup_stm32f10x_md.s</span>
<div class="a" style="left:294.80px;top:150.40px;width:980.00px;height:516.40px;background:#b9c99f;border:1px solid #a9b2a0;border-right:none;box-sizing:border-box;"></div>
<div class="a" style="left:298.40px;top:152.80px;width:980.00px;height:509.20px;background:#fff;border-left:2.6px solid #7b7b7b;border-top:1.9px solid #747474;box-sizing:border-box;"></div>
<div class="a" style="left:301.00px;top:154.50px;width:70.80px;height:485.60px;background:#e8e8e8;"></div>
<div class="a" style="left:371.80px;top:154.50px;width:18.40px;height:485.60px;background:#f7f7f7;background-image:repeating-conic-gradient(#fff 0 25%,#f0f0f0 0 50%);background-size:2px 2px;"></div>
<div class="a" style="left:301.00px;top:641.00px;width:980.00px;height:20.40px;background:#f0f0f0;"></div>
<div class="a" style="left:322.00px;top:650.00px;width:960.00px;height:2.20px;background:#7a7a7a;border-radius:1px;"></div>
<style>.c{position:absolute;white-space:pre;font:16px/16.25px "Liberation Mono",monospace;height:16.25px;transform:scaleX(0.9167);transform-origin:0 0;color:#000;}.c b{font-weight:normal;color:#0000ff;}.c i{font-style:normal;color:#008080;}.c u{text-decoration:none;color:#008000;}.c em{font-style:normal;position:relative;top:-4.5px;}.c s{text-decoration:none;text-shadow:1.3px 0 0 #008000,-1.3px 0 0 #008000;}.fl{position:absolute;background:#808080;}</style>
<div class="a" style="left:301px;top:154.5px;width:980px;height:485.6px;overflow:hidden;">
<div class="c" style="left:49.60px;top:2.00px;">25</div>
<div class="c" style="left:49.60px;top:18.25px;">26</div>
<div class="c" style="left:89.40px;top:18.25px;">  <b>if</b> (TIM4-&gt;SR &amp; (TIM_SR_UIF)) {</div>
<div class="c" style="left:49.60px;top:34.50px;">27</div>
<div class="c" style="left:49.60px;top:50.75px;">28</div>
<div class="c" style="left:89.40px;top:50.75px;">    <b>if</b> (Ccr ==   <i>0</i>) Dir =  <i>1</i>;</div>
<div class="c" style="left:49.60px;top:67.00px;">29</div>
<div class="c" style="left:89.40px;top:67.00px;">    <b>if</b> (Ccr == <i>100</i>) Dir = -<i>1</i>;</div>
<div class="c" style="left:49.60px;top:83.25px;">30</div>
<div class="c" style="left:89.40px;top:83.25px;">    Ccr = Ccr + Dir;</div>
<div class="c" style="left:49.60px;top:99.50px;">31</div>
<div class="c" style="left:89.40px;top:99.50px;">    TIM4-&gt;CCR3 = Ccr;</div>
<div class="c" style="left:49.60px;top:115.75px;">32</div>
<div class="c" style="left:89.40px;top:115.75px;">    TIM4-&gt;CCR4 = <i>100</i> - Ccr;</div>
<div class="c" style="left:49.60px;top:132.00px;">33</div>
<div class="c" style="left:49.60px;top:148.25px;">34</div>
<div class="c" style="left:89.40px;top:148.25px;">    TIM4-&gt;SR &amp;= <em>~</em>(TIM_SR_UIF);</div>
<div class="c" style="left:49.60px;top:164.50px;">35</div>
<div class="c" style="left:89.40px;top:164.50px;">  }</div>
<div class="c" style="left:49.60px;top:180.75px;">36</div>
<div class="c" style="left:89.40px;top:180.75px;">}</div>
<div class="c" style="left:49.60px;top:197.00px;">37</div>
<div class="c" style="left:49.60px;top:213.25px;">38</div>
<div class="c" style="left:89.40px;top:213.25px;"><u>/*<s>------------------------------------------------------------</s></u></div>
<div class="c" style="left:49.60px;top:229.50px;">39</div>
<div class="c" style="left:89.40px;top:229.50px;"><u>  initialize GPIO Pins  </u></div>
<div class="c" style="left:49.60px;top:245.75px;">40</div>
<div class="c" style="left:89.40px;top:245.75px;"><u> *<s>------------------------------------------------------------</s></u></div>
<div class="c" style="left:49.60px;top:262.00px;">41</div>
<div class="c" style="left:89.40px;top:262.00px;"><b>void</b> GPIO_Init (<b>void</b>) {</div>
<div class="c" style="left:49.60px;top:278.25px;">42</div>
<div class="c" style="left:49.60px;top:294.50px;">43</div>
<div class="c" style="left:89.40px;top:294.50px;"><u>  /* configure GPIOs used for LEDs */</u></div>
<div class="c" style="left:49.60px;top:310.75px;">44</div>
<div class="c" style="left:89.40px;top:310.75px;">  RCC-&gt;APB2ENR |=  RCC_APB2ENR_IOPBEN;</div>
<div class="c" style="left:49.60px;top:327.00px;">45</div>
<div class="c" style="left:89.40px;top:327.00px;">  GPIOB-&gt;ODR   &amp;= <em>~</em>(<i>0x0000FF00</i>);</div>
<div class="c" style="left:49.60px;top:343.25px;">46</div>
<div class="c" style="left:89.40px;top:343.25px;">  GPIOB-&gt;CRH    =  (<i>0x333333BB</i>);</div>
<div class="c" style="left:49.60px;top:359.50px;">47</div>
<div class="c" style="left:89.40px;top:359.50px;">}</div>
<div class="c" style="left:49.60px;top:375.75px;">48</div>
<div class="c" style="left:49.60px;top:392.00px;">49</div>
<div class="c" style="left:49.60px;top:408.25px;">50</div>
<div class="c" style="left:89.40px;top:408.25px;"><u>/*<s>------------------------------------------------------------</s></u></div>
<div class="c" style="left:49.60px;top:424.50px;">51</div>
<div class="c" style="left:89.40px;top:424.50px;"><u>  initialize Timer 4 for PWM</u></div>
<div class="c" style="left:49.60px;top:440.75px;">52</div>
<div class="c" style="left:89.40px;top:440.75px;"><u> *<s>------------------------------------------------------------</s></u></div>
<div class="c" style="left:49.60px;top:457.00px;">53</div>
<div class="c" style="left:89.40px;top:457.00px;"><b>void</b> TIM4_Init (<b>void</b>) {</div>
<div class="c" style="left:49.60px;top:473.25px;">54</div>
<div class="a" style="left:300.60px;top:228.50px;white-space:pre;font:16px/16.25px 'Liberation Mono','Noto Serif CJK SC',serif;color:#008000;">初始化端口</div>
<div class="fl" style="left:79.80px;top:-0.20px;width:1.3px;height:16.3px;"></div>
<div class="a" style="left:75.20px;top:18.85px;width:10.6px;height:10.6px;border:1.3px solid #808080;background:#fff;box-sizing:border-box;"></div>
<div class="fl" style="left:77.60px;top:23.25px;width:5.8px;height:1.7px;background:#707070;"></div>
<div class="fl" style="left:79.80px;top:30.05px;width:1.3px;height:2.30px;"></div>
<div class="fl" style="left:79.80px;top:16.05px;width:1.3px;height:3.40px;"></div>
<div class="fl" style="left:79.80px;top:32.30px;width:1.3px;height:16.3px;"></div>
<div class="fl" style="left:79.80px;top:48.55px;width:1.3px;height:16.3px;"></div>
<div class="fl" style="left:79.80px;top:64.80px;width:1.3px;height:16.3px;"></div>
<div class="fl" style="left:79.80px;top:81.05px;width:1.3px;height:16.3px;"></div>
<div class="fl" style="left:79.80px;top:97.30px;width:1.3px;height:16.3px;"></div>
<div class="fl" style="left:79.80px;top:113.55px;width:1.3px;height:16.3px;"></div>
<div class="fl" style="left:79.80px;top:129.80px;width:1.3px;height:16.3px;"></div>
<div class="fl" style="left:79.80px;top:146.05px;width:1.3px;height:16.3px;"></div>
<div class="fl" style="left:79.80px;top:162.30px;width:1.3px;height:16.3px;"></div>
<div class="fl" style="left:79.80px;top:170.30px;width:7.6px;height:1.3px;"></div>
<div class="fl" style="left:79.80px;top:178.55px;width:1.3px;height:16.3px;"></div>
<div class="fl" style="left:79.80px;top:194.80px;width:1.3px;height:9.00px;"></div>
<div class="fl" style="left:79.80px;top:202.80px;width:7.6px;height:1.3px;"></div>
<div class="a" style="left:75.20px;top:213.85px;width:10.6px;height:10.6px;border:1.3px solid #808080;background:#fff;box-sizing:border-box;"></div>
<div class="fl" style="left:77.60px;top:218.25px;width:5.8px;height:1.7px;background:#707070;"></div>
<div class="fl" style="left:79.80px;top:225.05px;width:1.3px;height:2.30px;"></div>
<div class="fl" style="left:79.80px;top:227.30px;width:1.3px;height:16.3px;"></div>
<div class="fl" style="left:79.80px;top:243.55px;width:1.3px;height:9.00px;"></div>
<div class="fl" style="left:79.80px;top:251.55px;width:7.6px;height:1.3px;"></div>
<div class="a" style="left:75.20px;top:262.60px;width:10.6px;height:10.6px;border:1.3px solid #808080;background:#fff;box-sizing:border-box;"></div>
<div class="fl" style="left:77.60px;top:267.00px;width:5.8px;height:1.7px;background:#707070;"></div>
<div class="fl" style="left:79.80px;top:273.80px;width:1.3px;height:2.30px;"></div>
<div class="fl" style="left:79.80px;top:276.05px;width:1.3px;height:16.3px;"></div>
<div class="fl" style="left:79.80px;top:292.30px;width:1.3px;height:16.3px;"></div>
<div class="fl" style="left:79.80px;top:308.55px;width:1.3px;height:16.3px;"></div>
<div class="fl" style="left:79.80px;top:324.80px;width:1.3px;height:16.3px;"></div>
<div class="fl" style="left:79.80px;top:341.05px;width:1.3px;height:16.3px;"></div>
<div class="fl" style="left:79.80px;top:357.30px;width:1.3px;height:16.3px;"></div>
<div class="fl" style="left:79.80px;top:373.55px;width:1.3px;height:16.3px;"></div>
<div class="fl" style="left:79.80px;top:389.80px;width:1.3px;height:9.00px;"></div>
<div class="fl" style="left:79.80px;top:397.80px;width:7.6px;height:1.3px;"></div>
<div class="a" style="left:75.20px;top:408.85px;width:10.6px;height:10.6px;border:1.3px solid #808080;background:#fff;box-sizing:border-box;"></div>
<div class="fl" style="left:77.60px;top:413.25px;width:5.8px;height:1.7px;background:#707070;"></div>
<div class="fl" style="left:79.80px;top:420.05px;width:1.3px;height:2.30px;"></div>
<div class="fl" style="left:79.80px;top:422.30px;width:1.3px;height:16.3px;"></div>
<div class="fl" style="left:79.80px;top:438.55px;width:1.3px;height:9.00px;"></div>
<div class="fl" style="left:79.80px;top:446.55px;width:7.6px;height:1.3px;"></div>
<div class="a" style="left:75.20px;top:457.60px;width:10.6px;height:10.6px;border:1.3px solid #808080;background:#fff;box-sizing:border-box;"></div>
<div class="fl" style="left:77.60px;top:462.00px;width:5.8px;height:1.7px;background:#707070;"></div>
<div class="fl" style="left:79.80px;top:468.80px;width:1.3px;height:2.30px;"></div>
<div class="fl" style="left:79.80px;top:471.05px;width:1.3px;height:16.3px;"></div>
</div>
<div class="a" style="left:592.60px;top:378.00px;width:104.00px;height:25.00px;border:2px solid #e8212b;box-sizing:border-box;"></div>
<div class="a" style="left:724.30px;top:113.40px;width:620.00px;height:640.00px;background:#f0f0f0;border:1px solid #b3b6ba;border-radius:8.5px;box-shadow:0 8px 38px 6px rgba(0,0,0,0.2), 0 2px 10px rgba(0,0,0,0.12);box-sizing:border-box;overflow:hidden;"><div style="position:absolute;left:0;top:0;width:100%;height:37.7px;background:#ecf4f9;"></div></div>
<span class="t" style="left:736.40px;top:123.30px;font-size:15.2px;color:#111;letter-spacing:-0.012px;">Configuration</span>
<div class="a" style="left:733.80px;top:184.40px;width:600.00px;height:1.20px;background:#fbfbfb;"></div>
<div class="a" style="left:733.80px;top:184.40px;width:1.30px;height:520.00px;background:#fbfbfb;"></div>
<div class="a" style="left:733.80px;top:160.40px;width:63.60px;height:25.40px;background:#f0f0f0;border-left:1.3px solid #fbfbfb;border-top:1.3px solid #fbfbfb;border-right:2.1px solid #828282;box-sizing:border-box;"></div>
<div class="a" style="left:797.40px;top:162.40px;width:117.20px;height:22.00px;border-top:1.3px solid #fbfbfb;border-right:2.1px solid #828282;box-sizing:border-box;"></div>
<div class="a" style="left:914.60px;top:162.40px;width:112.40px;height:22.00px;border-top:1.3px solid #fbfbfb;border-right:2.1px solid #828282;box-sizing:border-box;"></div>
<div class="a" style="left:1027.00px;top:162.40px;width:112.60px;height:22.00px;border-top:1.3px solid #fbfbfb;border-right:2.1px solid #828282;box-sizing:border-box;"></div>
<div class="a" style="left:1139.60px;top:162.40px;width:127.00px;height:22.00px;border-top:1.3px solid #fbfbfb;border-right:2.1px solid #828282;box-sizing:border-box;"></div>
<span class="t" style="left:741.80px;top:162.40px;font-size:15px;color:#000;font-family:'Liberation Mono', monospace;transform:scaleX(0.8333);">Editor</span>
<span class="t" style="left:801.60px;top:164.80px;font-size:15px;color:#000;font-family:'Liberation Mono', monospace;transform:scaleX(0.8333);">Colors &amp; Fonts</span>
<span class="t" style="left:921.60px;top:164.80px;font-size:15px;color:#000;font-family:'Liberation Mono', monospace;transform:scaleX(0.8333);">User Keywords</span>
<span class="t" style="left:1034.30px;top:164.80px;font-size:15px;color:#000;font-family:'Liberation Mono', monospace;transform:scaleX(0.8333);">Shortcut Keys</span>
<span class="t" style="left:1147.00px;top:164.80px;font-size:15px;color:#000;font-family:'Liberation Mono', monospace;transform:scaleX(0.8333);">Text Completion</span>
<div class="a" style="left:1102.20px;top:191.60px;width:1.70px;height:144.00px;background:#b2b2b2;"></div>
<div class="a" style="left:1103.90px;top:191.60px;width:1.00px;height:144.00px;background:#fcfcfc;"></div>
<div class="a" style="left:1102.20px;top:338.60px;width:1.70px;height:167.20px;background:#b2b2b2;"></div>
<div class="a" style="left:1103.90px;top:338.60px;width:1.00px;height:167.20px;background:#fcfcfc;"></div>
<div class="a" style="left:740.00px;top:335.70px;width:527.00px;height:1.50px;background:#b2b2b2;"></div>
<div class="a" style="left:740.00px;top:337.20px;width:527.00px;height:1.00px;background:#fcfcfc;"></div>
<div class="a" style="left:740.00px;top:510.60px;width:527.00px;height:1.50px;background:#b2b2b2;"></div>
<div class="a" style="left:740.00px;top:512.10px;width:527.00px;height:1.00px;background:#fcfcfc;"></div>
<div class="a" style="left:976.20px;top:514.00px;width:1.70px;height:176.00px;background:#b2b2b2;"></div>
<div class="a" style="left:977.90px;top:514.00px;width:1.00px;height:176.00px;background:#fcfcfc;"></div>
<div class="a" style="left:1223.80px;top:514.00px;width:1.70px;height:176.00px;background:#b2b2b2;"></div>
<div class="a" style="left:1225.50px;top:514.00px;width:1.00px;height:176.00px;background:#fcfcfc;"></div>
<span class="t" style="left:747.30px;top:199.10px;font-size:15px;color:#000;transform:scaleX(0.8690);-webkit-text-stroke:0.18px;">General Editor Settings:</span>
<span class="t" style="left:747.50px;top:226.30px;font-size:15px;color:#000;transform:scaleX(0.8888);-webkit-text-stroke:0.18px;">Encoding:</span>
<div class="a" style="left:833.40px;top:230.40px;width:232.00px;height:21.40px;background:#fff;border-style:solid;border-color:#7e7e7e #fff #fff #7e7e7e;border-width:2.4px 1.4px 1.4px 2.4px;box-sizing:border-box;"></div>
<div class="a" style="left:836.00px;top:233.00px;width:204.80px;height:17.60px;background:#0078d7;"></div>
<span class="t" style="left:838.00px;top:231.40px;font-size:15px;color:#fff;transform:scaleX(0.8582);-webkit-text-stroke:0.18px;">Chinese GB2312 (Simplified)</span>
<div class="a" style="left:1041.00px;top:232.80px;width:22.40px;height:18.00px;background:#f0f0f0;border-style:solid;border-color:#fff #6c6c6c #6c6c6c #fff;border-width:1.3px 2.2px 2.2px 1.3px;box-sizing:border-box;"></div>
<div class="tri" style="left:1047.0px;top:239.2px;border-left-width:4.8px;border-right-width:4.8px;border-top-width:5px;"></div>
<div class="a" style="left:833.60px;top:228.20px;width:231.40px;height:1.80px;background:#7e7e7e;"></div>
<div class="a" style="left:832.40px;top:229.90px;width:234.90px;height:22.50px;border:2px solid #f0141e;box-sizing:border-box;"></div>
<span class="t" style="left:747.50px;top:265.80px;font-size:15px;color:#000;transform:scaleX(0.8912);-webkit-text-stroke:0.18px;">Auto Indent:</span>
<div class="a" style="left:834.00px;top:266.30px;width:98.40px;height:24.40px;background:#fff;border-style:solid;border-color:#7e7e7e #fff #fff #7e7e7e;border-width:2.4px 1.4px 1.4px 2.4px;box-sizing:border-box;"></div>
<span class="t" style="left:838.80px;top:269.60px;font-size:15px;color:#000;transform:scaleX(0.8122);-webkit-text-stroke:0.18px;">Smart</span>
<div class="a" style="left:910.00px;top:268.80px;width:20.60px;height:20.00px;background:#f0f0f0;border-style:solid;border-color:#fff #6c6c6c #6c6c6c #fff;border-width:1.3px 2.2px 2.2px 1.3px;box-sizing:border-box;"></div>
<div class="tri" style="left:915.1px;top:276.2px;border-left-width:4.8px;border-right-width:4.8px;border-top-width:5px;"></div>
<div class="a" style="left:949.20px;top:264.90px;width:15.60px;height:15.60px;background:#fff;border-style:solid;border-color:#7c7c7c #fff #fff #7c7c7c;border-width:2.4px 1.4px 1.4px 2.4px;box-sizing:border-box;"></div>
<span class="t" style="left:971.40px;top:262.80px;font-size:15px;color:#000;transform:scaleX(0.8719);-webkit-text-stroke:0.18px;">Virtual Spaces</span>
<div class="a" style="left:949.20px;top:287.40px;width:15.60px;height:15.60px;background:#fff;border-style:solid;border-color:#7c7c7c #fff #fff #7c7c7c;border-width:2.4px 1.4px 1.4px 2.4px;box-sizing:border-box;"></div>
<span class="t" style="left:971.40px;top:285.30px;font-size:15px;color:#000;transform:scaleX(0.8966);-webkit-text-stroke:0.18px;">View White Space</span>
<div class="a" style="left:949.20px;top:309.90px;width:15.60px;height:15.60px;background:#fff;border-style:solid;border-color:#7c7c7c #fff #fff #7c7c7c;border-width:2.4px 1.4px 1.4px 2.4px;box-sizing:border-box;"></div>
<span class="t" style="left:971.40px;top:307.80px;font-size:15px;color:#000;transform:scaleX(0.8824);-webkit-text-stroke:0.18px;">View End of Line</span>
<span class="t" style="left:1115.20px;top:199.10px;font-size:15px;color:#000;transform:scaleX(0.8734);-webkit-text-stroke:0.18px;">Function Display:</span>
<div class="a" style="left:1129.00px;top:244.70px;width:15.60px;height:15.60px;background:#fff;border-style:solid;border-color:#7c7c7c #fff #fff #7c7c7c;border-width:2.4px 1.4px 1.4px 2.4px;box-sizing:border-box;"><svg style="left:1.2px;top:1.2px" width="11" height="11" viewBox="0 0 11 11"><path d="M1.4 4.6 L4.2 7.8 L9.6 1.4" fill="none" stroke="#000" stroke-width="2.6"/></svg></div>
<span class="t" style="left:1151.60px;top:242.70px;font-size:15px;color:#000;transform:scaleX(0.8642);-webkit-text-stroke:0.18px;">Display Modules</span>
<div class="a" style="left:1129.00px;top:266.90px;width:15.60px;height:15.60px;background:#fff;border-style:solid;border-color:#7c7c7c #fff #fff #7c7c7c;border-width:2.4px 1.4px 1.4px 2.4px;box-sizing:border-box;"><svg style="left:1.2px;top:1.2px" width="11" height="11" viewBox="0 0 11 11"><path d="M1.4 4.6 L4.2 7.8 L9.6 1.4" fill="none" stroke="#000" stroke-width="2.6"/></svg></div>
<span class="t" style="left:1151.60px;top:264.90px;font-size:15px;color:#000;transform:scaleX(0.8786);-webkit-text-stroke:0.18px;">Scan function names in project files</span>
<div class="a" style="left:1129.00px;top:289.10px;width:15.60px;height:15.60px;background:#fff;border-style:solid;border-color:#7c7c7c #fff #fff #7c7c7c;border-width:2.4px 1.4px 1.4px 2.4px;box-sizing:border-box;"><svg style="left:1.2px;top:1.2px" width="11" height="11" viewBox="0 0 11 11"><path d="M1.4 4.6 L4.2 7.8 L9.6 1.4" fill="none" stroke="#000" stroke-width="2.6"/></svg></div>
<span class="t" style="left:1151.60px;top:287.10px;font-size:15px;color:#000;transform:scaleX(0.8786);-webkit-text-stroke:0.18px;">Scan function names in current editor files</span>
<span class="t" style="left:747.80px;top:339.10px;font-size:15px;color:#000;transform:scaleX(0.8704);-webkit-text-stroke:0.18px;">Look &amp; Feel:</span>
<div class="a" style="left:765.00px;top:365.90px;width:15.60px;height:15.60px;background:#fff;border-style:solid;border-color:#7c7c7c #fff #fff #7c7c7c;border-width:2.4px 1.4px 1.4px 2.4px;box-sizing:border-box;"><svg style="left:1.2px;top:1.2px" width="11" height="11" viewBox="0 0 11 11"><path d="M1.4 4.6 L4.2 7.8 L9.6 1.4" fill="none" stroke="#000" stroke-width="2.6"/></svg></div>
<span class="t" style="left:788.00px;top:363.90px;font-size:15px;color:#000;transform:scaleX(0.8754);-webkit-text-stroke:0.18px;">Show Message Dialog during Find</span>
<div class="a" style="left:765.00px;top:388.40px;width:15.60px;height:15.60px;background:#fff;border-style:solid;border-color:#7c7c7c #fff #fff #7c7c7c;border-width:2.4px 1.4px 1.4px 2.4px;box-sizing:border-box;"><svg style="left:1.2px;top:1.2px" width="11" height="11" viewBox="0 0 11 11"><path d="M1.4 4.6 L4.2 7.8 L9.6 1.4" fill="none" stroke="#000" stroke-width="2.6"/></svg></div>
<span class="t" style="left:788.00px;top:386.40px;font-size:15px;color:#000;transform:scaleX(0.8602);-webkit-text-stroke:0.18px;">Highlight Current Line</span>
<div class="a" style="left:765.00px;top:410.90px;width:15.60px;height:15.60px;background:#fff;border-style:solid;border-color:#7c7c7c #fff #fff #7c7c7c;border-width:2.4px 1.4px 1.4px 2.4px;box-sizing:border-box;"><svg style="left:1.2px;top:1.2px" width="11" height="11" viewBox="0 0 11 11"><path d="M1.4 4.6 L4.2 7.8 L9.6 1.4" fill="none" stroke="#000" stroke-width="2.6"/></svg></div>
<span class="t" style="left:788.00px;top:408.90px;font-size:15px;color:#000;transform:scaleX(0.8765);-webkit-text-stroke:0.18px;">Highlight matching and mismatched braces</span>
<div class="a" style="left:765.00px;top:433.40px;width:15.60px;height:15.60px;background:#fff;border-style:solid;border-color:#7c7c7c #fff #fff #7c7c7c;border-width:2.4px 1.4px 1.4px 2.4px;box-sizing:border-box;"><svg style="left:1.2px;top:1.2px" width="11" height="11" viewBox="0 0 11 11"><path d="M1.4 4.6 L4.2 7.8 L9.6 1.4" fill="none" stroke="#000" stroke-width="2.6"/></svg></div>
<span class="t" style="left:788.00px;top:431.40px;font-size:15px;color:#000;transform:scaleX(0.8655);-webkit-text-stroke:0.18px;">Print with syntax coloring</span>
<div class="a" style="left:765.00px;top:455.90px;width:15.60px;height:15.60px;background:#fff;border-style:solid;border-color:#7c7c7c #fff #fff #7c7c7c;border-width:2.4px 1.4px 1.4px 2.4px;box-sizing:border-box;"><svg style="left:1.2px;top:1.2px" width="11" height="11" viewBox="0 0 11 11"><path d="M1.4 4.6 L4.2 7.8 L9.6 1.4" fill="none" stroke="#000" stroke-width="2.6"/></svg></div>
<span class="t" style="left:787.00px;top:453.90px;font-size:15px;color:#000;transform:scaleX(0.8823);-webkit-text-stroke:0.18px;">Colored Editor Tabs</span>
<span class="t" style="left:765.40px;top:480.60px;font-size:15px;color:#000;transform:scaleX(0.8778);-webkit-text-stroke:0.18px;">Right Margin:</span>
<div class="a" style="left:847.70px;top:478.30px;width:162.00px;height:24.00px;background:#fff;border-style:solid;border-color:#7e7e7e #fff #fff #7e7e7e;border-width:2.4px 1.4px 1.4px 2.4px;box-sizing:border-box;"></div>
<span class="t" style="left:852.70px;top:480.60px;font-size:15px;color:#000;transform:scaleX(0.8729);-webkit-text-stroke:0.18px;">None</span>
<div class="a" style="left:988.00px;top:480.80px;width:20.40px;height:20.00px;background:#f0f0f0;border-style:solid;border-color:#fff #6c6c6c #6c6c6c #fff;border-width:1.3px 2.2px 2.2px 1.3px;box-sizing:border-box;"></div>
<div class="tri" style="left:993.0px;top:488.2px;border-left-width:4.8px;border-right-width:4.8px;border-top-width:5px;"></div>
<span class="t" style="left:1020.80px;top:480.20px;font-size:15px;color:#000;transform:scaleX(0.8469);-webkit-text-stroke:0.18px;">at</span>
<div class="a" style="left:1039.40px;top:477.60px;width:52.60px;height:26.40px;background:#fff;border-style:solid;border-color:#7e7e7e #fff #fff #7e7e7e;border-width:2.4px 1.4px 1.4px 2.4px;box-sizing:border-box;"></div>
<span class="t" style="left:1042.60px;top:479.60px;font-size:15px;color:#000;transform:scaleX(0.8809);-webkit-text-stroke:0.18px;">80</span>
<div class="a" style="left:1071.40px;top:479.90px;width:19.80px;height:10.80px;background:#f0f0f0;border-style:solid;border-color:#fff #6c6c6c #6c6c6c #fff;border-width:1.3px 2.2px 2.2px 1.3px;box-sizing:border-box;"></div>
<div class="tri" style="left:1077.9px;top:483.3px;border-left-width:2.9px;border-right-width:2.9px;border-top:none;border-bottom:3px solid #000;"></div>
<div class="a" style="left:1071.40px;top:492.20px;width:19.80px;height:11.20px;background:#f0f0f0;border-style:solid;border-color:#fff #6c6c6c #6c6c6c #fff;border-width:1.3px 2.2px 2.2px 1.3px;box-sizing:border-box;"></div>
<div class="tri" style="left:1077.9px;top:496.0px;border-left-width:2.9px;border-right-width:2.9px;border-top-width:3px;"></div>
<span class="t" style="left:1115.20px;top:339.10px;font-size:15px;color:#000;transform:scaleX(0.8663);-webkit-text-stroke:0.18px;">File &amp; Project Handling:</span>
<div class="a" style="left:1129.00px;top:366.50px;width:15.60px;height:15.60px;background:#fff;border-style:solid;border-color:#7c7c7c #fff #fff #7c7c7c;border-width:2.4px 1.4px 1.4px 2.4px;box-sizing:border-box;"></div>
<span class="t" style="left:1151.00px;top:363.90px;font-size:15px;color:#000;transform:scaleX(0.8787);-webkit-text-stroke:0.18px;">Create Backup files (*.BAK)</span>
<div class="a" style="left:1129.00px;top:389.10px;width:15.60px;height:15.60px;background:#fff;border-style:solid;border-color:#7c7c7c #fff #fff #7c7c7c;border-width:2.4px 1.4px 1.4px 2.4px;box-sizing:border-box;"></div>
<span class="t" style="left:1151.00px;top:386.50px;font-size:15px;color:#000;transform:scaleX(0.8696);-webkit-text-stroke:0.18px;">Automatic reload of externally modified files</span>
<div class="a" style="left:1129.00px;top:411.70px;width:15.60px;height:15.60px;background:#fff;border-style:solid;border-color:#7c7c7c #fff #fff #7c7c7c;border-width:2.4px 1.4px 1.4px 2.4px;box-sizing:border-box;"></div>
<span class="t" style="left:1151.00px;top:409.10px;font-size:15px;color:#000;transform:scaleX(0.8880);-webkit-text-stroke:0.18px;">Save Project before entering Debug</span>
<div class="a" style="left:1129.00px;top:434.30px;width:15.60px;height:15.60px;background:#fff;border-style:solid;border-color:#7c7c7c #fff #fff #7c7c7c;border-width:2.4px 1.4px 1.4px 2.4px;box-sizing:border-box;"></div>
<span class="t" style="left:1151.00px;top:431.70px;font-size:15px;color:#000;transform:scaleX(0.9149);-webkit-text-stroke:0.18px;">Save Files before entering Debug</span>
<div class="a" style="left:1129.00px;top:456.90px;width:15.60px;height:15.60px;background:#fff;border-style:solid;border-color:#7c7c7c #fff #fff #7c7c7c;border-width:2.4px 1.4px 1.4px 2.4px;box-sizing:border-box;"></div>
<span class="t" style="left:1151.00px;top:454.30px;font-size:15px;color:#000;transform:scaleX(0.8716);-webkit-text-stroke:0.18px;">Auto save modified File every</span>
<span class="t" style="left:747.00px;top:515.80px;font-size:15px;color:#000;transform:scaleX(0.8709);-webkit-text-stroke:0.18px;">C/C++ Files:</span>
<div class="a" style="left:765.00px;top:545.90px;width:15.60px;height:15.60px;background:#fff;border-style:solid;border-color:#7c7c7c #fff #fff #7c7c7c;border-width:2.4px 1.4px 1.4px 2.4px;box-sizing:border-box;"><svg style="left:1.2px;top:1.2px" width="11" height="11" viewBox="0 0 11 11"><path d="M1.4 4.6 L4.2 7.8 L9.6 1.4" fill="none" stroke="#000" stroke-width="2.6"/></svg></div>
<span class="t" style="left:788.00px;top:543.60px;font-size:15px;color:#000;transform:scaleX(0.8663);-webkit-text-stroke:0.18px;">Use syntax coloring</span>
<div class="a" style="left:765.00px;top:568.20px;width:15.60px;height:15.60px;background:#fff;border-style:solid;border-color:#7c7c7c #fff #fff #7c7c7c;border-width:2.4px 1.4px 1.4px 2.4px;box-sizing:border-box;"></div>
<span class="t" style="left:788.00px;top:566.00px;font-size:15px;color:#000;transform:scaleX(0.8703);-webkit-text-stroke:0.18px;">Insert spaces for tabs</span>
<span class="t" style="left:772.00px;top:599.20px;font-size:15px;color:#000;transform:scaleX(0.8851);-webkit-text-stroke:0.18px;">Tab size:</span>
<div class="a" style="left:832.60px;top:595.40px;width:53.20px;height:27.00px;background:#fff;border-style:solid;border-color:#7e7e7e #fff #fff #7e7e7e;border-width:2.4px 1.4px 1.4px 2.4px;box-sizing:border-box;"></div>
<span class="t" style="left:836.60px;top:597.40px;font-size:15px;color:#000;transform:scaleX(0.9200);-webkit-text-stroke:0.18px;">2</span>
<div class="a" style="left:865.20px;top:597.80px;width:19.60px;height:10.80px;background:#f0f0f0;border-style:solid;border-color:#fff #6c6c6c #6c6c6c #fff;border-width:1.3px 2.2px 2.2px 1.3px;box-sizing:border-box;"></div>
<div class="tri" style="left:871.6px;top:601.2px;border-left-width:2.9px;border-right-width:2.9px;border-top:none;border-bottom:3px solid #000;"></div>
<div class="a" style="left:865.20px;top:610.00px;width:19.60px;height:11.00px;background:#f0f0f0;border-style:solid;border-color:#fff #6c6c6c #6c6c6c #fff;border-width:1.3px 2.2px 2.2px 1.3px;box-sizing:border-box;"></div>
<div class="tri" style="left:871.6px;top:613.7px;border-left-width:2.9px;border-right-width:2.9px;border-top-width:3px;"></div>
<div class="a" style="left:765.00px;top:632.60px;width:15.60px;height:15.60px;background:#fff;border-style:solid;border-color:#7c7c7c #fff #fff #7c7c7c;border-width:2.4px 1.4px 1.4px 2.4px;box-sizing:border-box;"><svg style="left:1.2px;top:1.2px" width="11" height="11" viewBox="0 0 11 11"><path d="M1.4 4.6 L4.2 7.8 L9.6 1.4" fill="none" stroke="#000" stroke-width="2.6"/></svg></div>
<span class="t" style="left:788.00px;top:630.60px;font-size:15px;color:#000;transform:scaleX(0.8706);-webkit-text-stroke:0.18px;">Show Line Numbers</span>
<div class="a" style="left:765.00px;top:657.30px;width:15.60px;height:15.60px;background:#fff;border-style:solid;border-color:#7c7c7c #fff #fff #7c7c7c;border-width:2.4px 1.4px 1.4px 2.4px;box-sizing:border-box;"><svg style="left:1.2px;top:1.2px" width="11" height="11" viewBox="0 0 11 11"><path d="M1.4 4.6 L4.2 7.8 L9.6 1.4" fill="none" stroke="#000" stroke-width="2.6"/></svg></div>
<span class="t" style="left:788.00px;top:655.50px;font-size:15px;color:#000;transform:scaleX(0.8753);-webkit-text-stroke:0.18px;">Use monospaced Font</span>
<div class="a" style="left:765.00px;top:682.00px;width:15.60px;height:15.60px;background:#fff;border-style:solid;border-color:#7c7c7c #fff #fff #7c7c7c;border-width:2.4px 1.4px 1.4px 2.4px;box-sizing:border-box;"><svg style="left:1.2px;top:1.2px" width="11" height="11" viewBox="0 0 11 11"><path d="M1.4 4.6 L4.2 7.8 L9.6 1.4" fill="none" stroke="#000" stroke-width="2.6"/></svg></div>
<span class="t" style="left:787.00px;top:680.40px;font-size:15px;color:#000;transform:scaleX(0.8770);-webkit-text-stroke:0.18px;">Open with Outlining</span>
<span class="t" style="left:994.00px;top:515.80px;font-size:15px;color:#000;transform:scaleX(0.8509);-webkit-text-stroke:0.18px;">ASM Files:</span>
<div class="a" style="left:1005.50px;top:545.90px;width:15.60px;height:15.60px;background:#fff;border-style:solid;border-color:#7c7c7c #fff #fff #7c7c7c;border-width:2.4px 1.4px 1.4px 2.4px;box-sizing:border-box;"><svg style="left:1.2px;top:1.2px" width="11" height="11" viewBox="0 0 11 11"><path d="M1.4 4.6 L4.2 7.8 L9.6 1.4" fill="none" stroke="#000" stroke-width="2.6"/></svg></div>
<span class="t" style="left:1028.00px;top:543.60px;font-size:15px;color:#000;transform:scaleX(0.8663);-webkit-text-stroke:0.18px;">Use syntax coloring</span>
<div class="a" style="left:1005.50px;top:568.20px;width:15.60px;height:15.60px;background:#fff;border-style:solid;border-color:#7c7c7c #fff #fff #7c7c7c;border-width:2.4px 1.4px 1.4px 2.4px;box-sizing:border-box;"></div>
<span class="t" style="left:1028.00px;top:566.00px;font-size:15px;color:#000;transform:scaleX(0.8703);-webkit-text-stroke:0.18px;">Insert spaces for tabs</span>
<span class="t" style="left:1012.00px;top:599.20px;font-size:15px;color:#000;transform:scaleX(0.8817);-webkit-text-stroke:0.18px;">Tab size:</span>
<div class="a" style="left:1072.40px;top:595.40px;width:53.20px;height:27.00px;background:#fff;border-style:solid;border-color:#7e7e7e #fff #fff #7e7e7e;border-width:2.4px 1.4px 1.4px 2.4px;box-sizing:border-box;"></div>
<span class="t" style="left:1076.40px;top:597.40px;font-size:15px;color:#000;transform:scaleX(0.9200);-webkit-text-stroke:0.18px;">4</span>
<div class="a" style="left:1105.00px;top:597.80px;width:19.60px;height:10.80px;background:#f0f0f0;border-style:solid;border-color:#fff #6c6c6c #6c6c6c #fff;border-width:1.3px 2.2px 2.2px 1.3px;box-sizing:border-box;"></div>
<div class="tri" style="left:1111.4px;top:601.2px;border-left-width:2.9px;border-right-width:2.9px;border-top:none;border-bottom:3px solid #000;"></div>
<div class="a" style="left:1105.00px;top:610.00px;width:19.60px;height:11.00px;background:#f0f0f0;border-style:solid;border-color:#fff #6c6c6c #6c6c6c #fff;border-width:1.3px 2.2px 2.2px 1.3px;box-sizing:border-box;"></div>
<div class="tri" style="left:1111.4px;top:613.7px;border-left-width:2.9px;border-right-width:2.9px;border-top-width:3px;"></div>
<div class="a" style="left:1005.50px;top:632.60px;width:15.60px;height:15.60px;background:#fff;border-style:solid;border-color:#7c7c7c #fff #fff #7c7c7c;border-width:2.4px 1.4px 1.4px 2.4px;box-sizing:border-box;"><svg style="left:1.2px;top:1.2px" width="11" height="11" viewBox="0 0 11 11"><path d="M1.4 4.6 L4.2 7.8 L9.6 1.4" fill="none" stroke="#000" stroke-width="2.6"/></svg></div>
<span class="t" style="left:1028.00px;top:630.60px;font-size:15px;color:#000;transform:scaleX(0.8691);-webkit-text-stroke:0.18px;">Show Line Numbers</span>
<div class="a" style="left:1005.50px;top:657.30px;width:15.60px;height:15.60px;background:#fff;border-style:solid;border-color:#7c7c7c #fff #fff #7c7c7c;border-width:2.4px 1.4px 1.4px 2.4px;box-sizing:border-box;"><svg style="left:1.2px;top:1.2px" width="11" height="11" viewBox="0 0 11 11"><path d="M1.4 4.6 L4.2 7.8 L9.6 1.4" fill="none" stroke="#000" stroke-width="2.6"/></svg></div>
<span class="t" style="left:1028.00px;top:655.50px;font-size:15px;color:#000;transform:scaleX(0.8766);-webkit-text-stroke:0.18px;">Use monospaced Font</span>
<span class="t" style="left:1238.30px;top:515.80px;font-size:15px;color:#000;transform:scaleX(0.8517);-webkit-text-stroke:0.18px;">Other Files:</span>
<div class="a" style="left:1249.00px;top:568.20px;width:15.60px;height:15.60px;background:#fff;border-style:solid;border-color:#7c7c7c #fff #fff #7c7c7c;border-width:2.4px 1.4px 1.4px 2.4px;box-sizing:border-box;"></div>
<div class="a" style="left:1249.00px;top:632.60px;width:15.60px;height:15.60px;background:#fff;border-style:solid;border-color:#7c7c7c #fff #fff #7c7c7c;border-width:2.4px 1.4px 1.4px 2.4px;box-sizing:border-box;"></div>
<div class="a" style="left:1249.00px;top:657.30px;width:15.60px;height:15.60px;background:#fff;border-style:solid;border-color:#7c7c7c #fff #fff #7c7c7c;border-width:2.4px 1.4px 1.4px 2.4px;box-sizing:border-box;"><svg style="left:1.2px;top:1.2px" width="11" height="11" viewBox="0 0 11 11"><path d="M1.4 4.6 L4.2 7.8 L9.6 1.4" fill="none" stroke="#000" stroke-width="2.6"/></svg></div>
<span class="t" style="left:1255.60px;top:599.20px;font-size:15px;color:#000;transform:scaleX(0.9200);-webkit-text-stroke:0.18px;">Tab size:</span>
</body></html>
